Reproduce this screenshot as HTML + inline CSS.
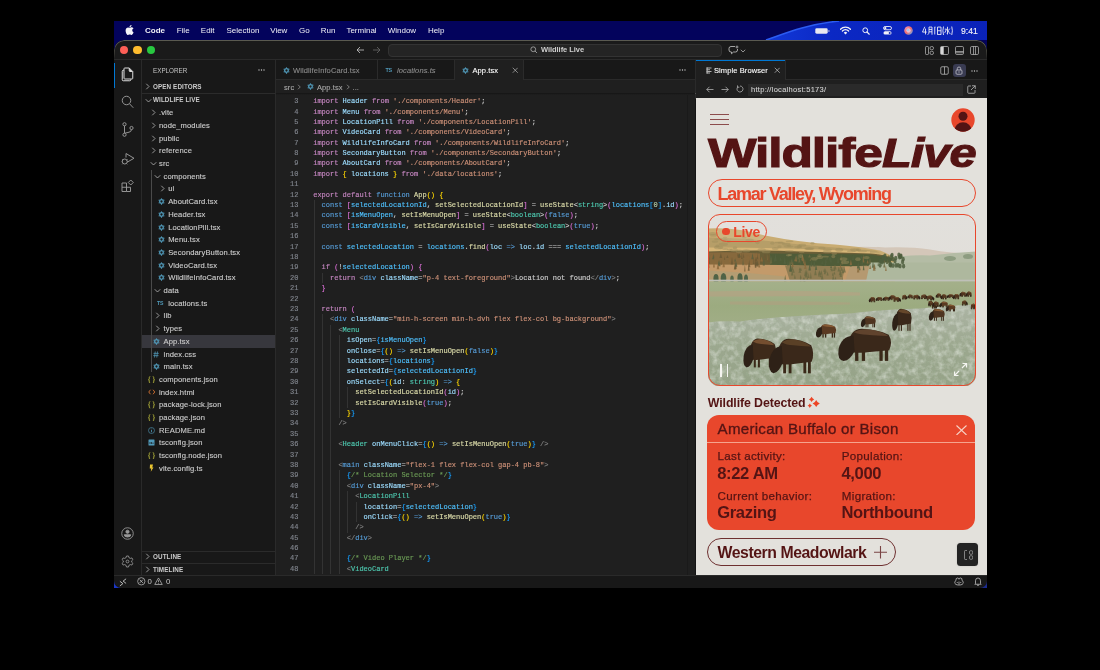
<!DOCTYPE html>
<html><head><meta charset="utf-8">
<style>
*{margin:0;padding:0;box-sizing:border-box}
html,body{width:1100px;height:670px;background:#000;overflow:hidden;font-family:"Liberation Sans",sans-serif}
.a{position:absolute}
#screen{left:114px;top:21px;width:873px;height:567px;overflow:hidden;background:#03035c}
#menubar{left:0;top:0;width:1100px;height:40px;color:#f0f0f6;font-size:8px;will-change:transform}
#menubar span{position:absolute;top:27px;white-space:nowrap;line-height:8px}
#win{left:0;top:0;width:1100px;height:670px;will-change:transform;clip-path:inset(40px 113px 82px 114px round 10px 10px 7px 7px)}
.p{position:absolute}
.mono{font-family:"Liberation Mono",monospace}
.tb{font-size:7.5px;line-height:9px;white-space:nowrap;letter-spacing:0.1px;-webkit-text-stroke:0.1px currentColor}
.ln{left:0;width:22.5px;text-align:right;font-family:"Liberation Mono",monospace;font-size:7px;line-height:10.395px;color:#80858d;-webkit-text-stroke:0.15px currentColor}
.cd{font-family:"Liberation Mono",monospace;font-size:7px;line-height:10.38px;white-space:pre;-webkit-text-stroke:0.15px currentColor}
.t{font-size:7.6px;line-height:9px;color:#cccccc;white-space:nowrap;letter-spacing:0.1px;-webkit-text-stroke:0.12px currentColor}
</style></head><body>
<div id="screen" class="a">
 <svg class="a" style="left:0;top:0" width="873" height="567" viewBox="0 0 873 567">
  <defs><linearGradient id="sg" x1="0" y1="0" x2="1" y2="0">
   <stop offset="0" stop-color="#1238d8"/><stop offset="0.3" stop-color="#0b28c4"/><stop offset="1" stop-color="#0a22b8"/></linearGradient></defs>
  <path d="M652 19 C 672 12, 690 4, 725 0 L 873 0 L 873 19 Z" fill="url(#sg)"/>
  <path d="M652 19 C 672 12, 690 4, 725 0" fill="none" stroke="#2c5cf2" stroke-width="1.6"/>
  <rect x="0" y="555" width="12" height="12" fill="#1a36c8"/>
  <rect x="861" y="555" width="12" height="12" fill="#1a2a90"/>
 </svg>
</div>
<div id="menubar" class="a">
 <svg class="a" style="left:125px;top:25px" width="9" height="10" viewBox="0 0 814 1000"><path fill="#f4f4f8" d="M788 341c-6 4-108 62-108 190 0 148 130 200 134 202-1 3-21 72-69 142-43 62-88 124-156 124s-86-40-164-40c-77 0-104 41-167 41s-106-57-156-127C63 791 16 662 16 539 16 343 144 239 270 239c67 0 123 44 165 44 40 0 102-47 178-47 29 0 133 3 201 105zM554 158c31-37 53-88 53-139 0-7-1-14-2-20-50 2-110 33-146 76-28 32-55 83-55 135 0 8 1 15 2 18 3 1 8 1 13 1 45 0 102-30 135-71z"/></svg>
 <span style="left:145px;font-weight:bold">Code</span>
 <span style="left:176.7px">File</span>
 <span style="left:200.8px">Edit</span>
 <span style="left:226.5px">Selection</span>
 <span style="left:270.2px">View</span>
 <span style="left:299px">Go</span>
 <span style="left:320.8px">Run</span>
 <span style="left:346.4px">Terminal</span>
 <span style="left:387.7px">Window</span>
 <span style="left:427.9px">Help</span>
 <svg class="a" style="left:815px;top:28px" width="15" height="6" viewBox="0 0 15 6"><rect x="0.3" y="0.3" width="12.4" height="5.4" rx="1.4" fill="#e8e8f0"/><rect x="13.3" y="2" width="1.2" height="2" rx="0.5" fill="#9aa0d0"/></svg>
 <svg class="a" style="left:840px;top:26px" width="11" height="9" viewBox="0 0 22 18"><path d="M1 6.5 A14 14 0 0 1 21 6.5" fill="none" stroke="#f2f2f8" stroke-width="2.6" stroke-linecap="round"/><path d="M4.8 10 A8.6 8.6 0 0 1 17.2 10" fill="none" stroke="#f2f2f8" stroke-width="2.6" stroke-linecap="round"/><path d="M11 17 L7.6 13.4 A4.6 4.6 0 0 1 14.4 13.4 Z" fill="#f2f2f8"/></svg>
 <svg class="a" style="left:861.5px;top:26.5px" width="8" height="8" viewBox="0 0 16 16"><circle cx="6.5" cy="6.5" r="4.8" fill="none" stroke="#f2f2f8" stroke-width="2"/><path d="M10 10 L14.5 14.5" stroke="#f2f2f8" stroke-width="2.2" stroke-linecap="round"/></svg>
 <svg class="a" style="left:882.5px;top:26px" width="9" height="9" viewBox="0 0 18 18"><rect x="1" y="1" width="16" height="6.5" rx="3.25" fill="none" stroke="#f2f2f8" stroke-width="1.8"/><circle cx="4.6" cy="4.25" r="2.2" fill="#f2f2f8"/><rect x="1" y="10.5" width="16" height="6.5" rx="3.25" fill="#f2f2f8"/><circle cx="13.4" cy="13.75" r="2" fill="#1a2ab0"/></svg>
 <svg class="a" style="left:903.5px;top:26px" width="9" height="9" viewBox="0 0 18 18"><defs><linearGradient id="siri" x1="0" y1="0" x2="1" y2="1"><stop offset="0" stop-color="#f0a0c0"/><stop offset="0.5" stop-color="#f06a6a"/><stop offset="1" stop-color="#60b0f0"/></linearGradient></defs><circle cx="9" cy="9" r="8.5" fill="url(#siri)"/><circle cx="9" cy="9" r="4.5" fill="#f4d0e8" opacity="0.8"/><circle cx="8" cy="8" r="2.5" fill="#8ad0f8" opacity="0.7"/></svg>
 <svg class="a" style="left:921.5px;top:26px" width="36" height="9.5" viewBox="0 0 72 18" preserveAspectRatio="none" fill="none" stroke="#f2f2f8" stroke-width="1.7">
  <path d="M5.5 1.5 L1 11.5 H9.5 M7 5 V16"/>
  <path d="M14 2 V11 Q14 15 11.5 16.5 M14 2 H20 V16.5 M14 6.5 H20 M14 11 H20"/>
  <path d="M25.5 16 V2 M25 2 H27"/>
  <path d="M31 2 V16.5 M31 2 H38 V16.5 M31 9 H38 M31 16 H38"/>
  <path d="M43 1 Q40.5 9 43 17"/>
  <path d="M51 1.5 V15.5 L49.5 14.5 M45.5 6 H49 L45.5 13 M55.5 5 L52.5 8.5 M52 8 Q54 13 57 15.5"/>
  <path d="M59.5 1 Q62 9 59.5 17"/>
 </svg>
 <span style="left:961px;font-size:8.6px;top:26.5px;-webkit-text-stroke:0.15px #f0f0f6">9:41</span>
</div>
<div id="win" class="a">
 <!-- base -->
 <div class="p" style="left:114px;top:40px;width:873px;height:548px;background:#181818"></div>

 <!-- title bar content -->
 <div class="p" style="left:114px;top:40px;width:873px;height:19px;background:#1a1a1a"></div>
 <div class="p" style="left:114px;top:40px;width:873px;height:30px;border:1px solid #5a5a50;border-bottom:none;border-radius:10px 10px 0 0;-webkit-mask-image:linear-gradient(#000 0,#000 4px,transparent 20px)"></div>
 <div class="p" style="left:119.8px;top:45.8px;width:8.4px;height:8.4px;border-radius:50%;background:#fe5f57"></div>
 <div class="p" style="left:133.4px;top:45.8px;width:8.4px;height:8.4px;border-radius:50%;background:#febc2e"></div>
 <div class="p" style="left:146.8px;top:45.8px;width:8.4px;height:8.4px;border-radius:50%;background:#28c840"></div>
 <svg class="p" style="left:356px;top:46px" width="9" height="8" viewBox="0 0 18 16" fill="none" stroke="#c8c8c8" stroke-width="1.6"><path d="M2 8 H16 M8 2 L2 8 L8 14"/></svg>
 <svg class="p" style="left:371.5px;top:46px" width="9" height="8" viewBox="0 0 18 16" fill="none" stroke="#6a6a6a" stroke-width="1.6"><path d="M2 8 H16 M10 2 L16 8 L10 14"/></svg>
 <div class="p" style="left:387.5px;top:43.5px;width:334px;height:13.5px;border-radius:4px;background:#242424;border:1px solid #333"></div>
 <svg class="p" style="left:529.5px;top:46px" width="8" height="7.5" viewBox="0 0 16 15" fill="none" stroke="#b8b8b8" stroke-width="1.5"><circle cx="6.5" cy="6.5" r="4.8"/><path d="M10 10 L14 14"/></svg>
 <div class="p" style="left:541px;top:46px;font-size:7.5px;line-height:8px;color:#cfcfcf;font-weight:bold;letter-spacing:-0.05px">Wildlife Live</div>
 <svg class="p" style="left:727.5px;top:45px" width="11" height="10" viewBox="0 0 22 20" fill="none" stroke="#c8c8c8" stroke-width="1.6"><path d="M14 3 H6 Q2 3 2 7 V10 Q2 14 6 14 H7 L7 17.5 L11 14 H15 Q19 14 19 10 V8"/><path d="M18 1 L18.6 3.4 L21 4 L18.6 4.6 L18 7 L17.4 4.6 L15 4 L17.4 3.4Z" fill="#c8c8c8" stroke-width="0.6"/></svg>
 <svg class="p" style="left:740px;top:48.5px" width="6" height="4" viewBox="0 0 12 8" fill="none" stroke="#b0b0b0" stroke-width="1.6"><path d="M1.5 1.5 L6 6 L10.5 1.5"/></svg>
 <svg class="p" style="left:924.5px;top:45.5px" width="9" height="9" viewBox="0 0 18 18" fill="none" stroke="#c0c0c0" stroke-width="1.4"><rect x="1" y="1" width="6" height="16" rx="1.5"/><rect x="10" y="1" width="7" height="6.5" rx="3"/><rect x="10" y="10.5" width="7" height="6.5" rx="3"/></svg>
 <svg class="p" style="left:939.5px;top:45.5px" width="9" height="9" viewBox="0 0 18 18" fill="none" stroke="#c8c8c8" stroke-width="1.4"><rect x="1" y="1" width="16" height="16" rx="2.5"/><rect x="1.5" y="1.5" width="5" height="15" fill="#d8d8d8" stroke="none"/><path d="M7 1 V17"/></svg>
 <svg class="p" style="left:954.5px;top:45.5px" width="9" height="9" viewBox="0 0 18 18" fill="none" stroke="#c0c0c0" stroke-width="1.4"><rect x="1" y="1" width="16" height="16" rx="2.5"/><path d="M1 11 H17 M1 13.5 H17"/></svg>
 <svg class="p" style="left:970px;top:45.5px" width="9" height="9" viewBox="0 0 18 18" fill="none" stroke="#c0c0c0" stroke-width="1.4"><rect x="1" y="1" width="16" height="16" rx="2.5"/><path d="M7 1 V17 M11 1 V17"/></svg>
 <!-- titlebar border -->
 <div class="p" style="left:114px;top:59px;width:873px;height:1px;background:#2a2a2a"></div>
 <!-- activity bar border -->
 <div class="p" style="left:141px;top:60px;width:1px;height:515px;background:#2a2a2a"></div>
 <!-- sidebar border -->
 <div class="p" style="left:275px;top:60px;width:1px;height:515px;background:#2a2a2a"></div>
 <!-- editor 1 -->
 <div class="p" style="left:276px;top:80px;width:419px;height:495px;background:#1f1f1f"></div>
 <div class="p" style="left:276px;top:79px;width:419px;height:1px;background:#2a2a2a"></div>
 <!-- group separator -->
 <div class="p" style="left:695px;top:60px;width:1px;height:39px;background:#2a2a2a"></div>
 <div class="p" style="left:694.6px;top:98.5px;width:1.6px;height:476.5px;background:#141414"></div>
 <div class="p" style="left:687.3px;top:94px;width:0.9px;height:481px;background:#1a1a1a"></div>
 <!-- editor 2 -->
 <div class="p" style="left:696px;top:80px;width:291px;height:19px;background:#1f1f1f"></div>
 <div class="p" style="left:696px;top:79px;width:291px;height:1px;background:#2a2a2a"></div>
 <div class="p" style="left:696px;top:98px;width:291px;height:477px;background:#e3e1dc"></div>
<!--SIDEBAR-->
<div class="p" style="left:153px;top:66.6px;font-size:6.3px;line-height:7px;color:#c4c4c4;letter-spacing:0px">EXPLORER</div>
<svg class="p" style="left:257.5px;top:69px" width="7" height="2" viewBox="0 0 14 4" fill="#c8c8c8"><circle cx="2" cy="2" r="1.3"/><circle cx="7" cy="2" r="1.3"/><circle cx="12" cy="2" r="1.3"/></svg>
<svg class="p" style="left:145px;top:83.2px" width="5" height="7" viewBox="0 0 10 14" fill="none" stroke="#c0c0c0" stroke-width="1.5"><path d="M2.5 1.5 L8 7 L2.5 12.5"/></svg>
<div class="p" style="left:153px;top:83.2px;font-size:6.3px;line-height:7px;color:#cccccc;font-weight:bold;letter-spacing:0.1px">OPEN EDITORS</div>
<div class="p" style="left:142px;top:93px;width:133px;height:1px;background:#2b2b2b"></div>
<svg class="p" style="left:144.5px;top:97.5px" width="7" height="5" viewBox="0 0 14 10" fill="none" stroke="#c0c0c0" stroke-width="1.5"><path d="M1.5 2.5 L7 8 L12.5 2.5"/></svg>
<div class="p" style="left:153px;top:96.2px;font-size:6.3px;line-height:7px;color:#cccccc;font-weight:bold;letter-spacing:0.1px">WILDLIFE LIVE</div>
<svg class="p" style="left:150.80px;top:109.20px" width="5" height="7" viewBox="0 0 10 14" fill="none" stroke="#c0c0c0" stroke-width="1.5"><path d="M2.5 1.5 L8 7 L2.5 12.5"/></svg>
<div class="p t" style="left:159.00px;top:108.20px">.vite</div>
<svg class="p" style="left:150.80px;top:121.90px" width="5" height="7" viewBox="0 0 10 14" fill="none" stroke="#c0c0c0" stroke-width="1.5"><path d="M2.5 1.5 L8 7 L2.5 12.5"/></svg>
<div class="p t" style="left:159.00px;top:120.90px">node_modules</div>
<svg class="p" style="left:150.80px;top:134.60px" width="5" height="7" viewBox="0 0 10 14" fill="none" stroke="#c0c0c0" stroke-width="1.5"><path d="M2.5 1.5 L8 7 L2.5 12.5"/></svg>
<div class="p t" style="left:159.00px;top:133.60px">public</div>
<svg class="p" style="left:150.80px;top:147.30px" width="5" height="7" viewBox="0 0 10 14" fill="none" stroke="#c0c0c0" stroke-width="1.5"><path d="M2.5 1.5 L8 7 L2.5 12.5"/></svg>
<div class="p t" style="left:159.00px;top:146.30px">reference</div>
<svg class="p" style="left:149.50px;top:161.00px" width="7" height="5" viewBox="0 0 14 10" fill="none" stroke="#c0c0c0" stroke-width="1.5"><path d="M1.5 2.5 L7 8 L12.5 2.5"/></svg>
<div class="p t" style="left:159.00px;top:159.00px">src</div>
<svg class="p" style="left:154.10px;top:173.70px" width="7" height="5" viewBox="0 0 14 10" fill="none" stroke="#c0c0c0" stroke-width="1.5"><path d="M1.5 2.5 L7 8 L12.5 2.5"/></svg>
<div class="p t" style="left:163.60px;top:171.70px">components</div>
<svg class="p" style="left:160.00px;top:185.40px" width="5" height="7" viewBox="0 0 10 14" fill="none" stroke="#c0c0c0" stroke-width="1.5"><path d="M2.5 1.5 L8 7 L2.5 12.5"/></svg>
<div class="p t" style="left:168.20px;top:184.40px">ui</div>
<svg class="p" style="left:157.6px;top:198.1px" width="7" height="7" viewBox="0 0 14 14" fill="none" stroke="#519aba"><circle cx="7" cy="7" r="3.6" stroke-width="2.6"/><g fill="#519aba" stroke="none"><circle cx="7" cy="1.6" r="1.2"/><circle cx="7" cy="12.4" r="1.2"/><circle cx="2.3" cy="4.3" r="1.2"/><circle cx="11.7" cy="4.3" r="1.2"/><circle cx="2.3" cy="9.7" r="1.2"/><circle cx="11.7" cy="9.7" r="1.2"/></g></svg>
<div class="p t" style="left:168.20px;top:197.10px">AboutCard.tsx</div>
<svg class="p" style="left:157.6px;top:210.8px" width="7" height="7" viewBox="0 0 14 14" fill="none" stroke="#519aba"><circle cx="7" cy="7" r="3.6" stroke-width="2.6"/><g fill="#519aba" stroke="none"><circle cx="7" cy="1.6" r="1.2"/><circle cx="7" cy="12.4" r="1.2"/><circle cx="2.3" cy="4.3" r="1.2"/><circle cx="11.7" cy="4.3" r="1.2"/><circle cx="2.3" cy="9.7" r="1.2"/><circle cx="11.7" cy="9.7" r="1.2"/></g></svg>
<div class="p t" style="left:168.20px;top:209.80px">Header.tsx</div>
<svg class="p" style="left:157.6px;top:223.5px" width="7" height="7" viewBox="0 0 14 14" fill="none" stroke="#519aba"><circle cx="7" cy="7" r="3.6" stroke-width="2.6"/><g fill="#519aba" stroke="none"><circle cx="7" cy="1.6" r="1.2"/><circle cx="7" cy="12.4" r="1.2"/><circle cx="2.3" cy="4.3" r="1.2"/><circle cx="11.7" cy="4.3" r="1.2"/><circle cx="2.3" cy="9.7" r="1.2"/><circle cx="11.7" cy="9.7" r="1.2"/></g></svg>
<div class="p t" style="left:168.20px;top:222.50px">LocationPill.tsx</div>
<svg class="p" style="left:157.6px;top:236.2px" width="7" height="7" viewBox="0 0 14 14" fill="none" stroke="#519aba"><circle cx="7" cy="7" r="3.6" stroke-width="2.6"/><g fill="#519aba" stroke="none"><circle cx="7" cy="1.6" r="1.2"/><circle cx="7" cy="12.4" r="1.2"/><circle cx="2.3" cy="4.3" r="1.2"/><circle cx="11.7" cy="4.3" r="1.2"/><circle cx="2.3" cy="9.7" r="1.2"/><circle cx="11.7" cy="9.7" r="1.2"/></g></svg>
<div class="p t" style="left:168.20px;top:235.20px">Menu.tsx</div>
<svg class="p" style="left:157.6px;top:248.9px" width="7" height="7" viewBox="0 0 14 14" fill="none" stroke="#519aba"><circle cx="7" cy="7" r="3.6" stroke-width="2.6"/><g fill="#519aba" stroke="none"><circle cx="7" cy="1.6" r="1.2"/><circle cx="7" cy="12.4" r="1.2"/><circle cx="2.3" cy="4.3" r="1.2"/><circle cx="11.7" cy="4.3" r="1.2"/><circle cx="2.3" cy="9.7" r="1.2"/><circle cx="11.7" cy="9.7" r="1.2"/></g></svg>
<div class="p t" style="left:168.20px;top:247.90px">SecondaryButton.tsx</div>
<svg class="p" style="left:157.6px;top:261.6px" width="7" height="7" viewBox="0 0 14 14" fill="none" stroke="#519aba"><circle cx="7" cy="7" r="3.6" stroke-width="2.6"/><g fill="#519aba" stroke="none"><circle cx="7" cy="1.6" r="1.2"/><circle cx="7" cy="12.4" r="1.2"/><circle cx="2.3" cy="4.3" r="1.2"/><circle cx="11.7" cy="4.3" r="1.2"/><circle cx="2.3" cy="9.7" r="1.2"/><circle cx="11.7" cy="9.7" r="1.2"/></g></svg>
<div class="p t" style="left:168.20px;top:260.60px">VideoCard.tsx</div>
<svg class="p" style="left:157.6px;top:274.3px" width="7" height="7" viewBox="0 0 14 14" fill="none" stroke="#519aba"><circle cx="7" cy="7" r="3.6" stroke-width="2.6"/><g fill="#519aba" stroke="none"><circle cx="7" cy="1.6" r="1.2"/><circle cx="7" cy="12.4" r="1.2"/><circle cx="2.3" cy="4.3" r="1.2"/><circle cx="11.7" cy="4.3" r="1.2"/><circle cx="2.3" cy="9.7" r="1.2"/><circle cx="11.7" cy="9.7" r="1.2"/></g></svg>
<div class="p t" style="left:168.20px;top:273.30px">WildlifeInfoCard.tsx</div>
<svg class="p" style="left:154.10px;top:288.00px" width="7" height="5" viewBox="0 0 14 10" fill="none" stroke="#c0c0c0" stroke-width="1.5"><path d="M1.5 2.5 L7 8 L12.5 2.5"/></svg>
<div class="p t" style="left:163.60px;top:286.00px">data</div>
<div class="p" style="left:157.1px;top:299.7px;font-size:5.2px;line-height:7px;font-weight:bold;color:#519aba;letter-spacing:-0.2px">TS</div>
<div class="p t" style="left:168.20px;top:298.70px">locations.ts</div>
<svg class="p" style="left:155.40px;top:312.40px" width="5" height="7" viewBox="0 0 10 14" fill="none" stroke="#c0c0c0" stroke-width="1.5"><path d="M2.5 1.5 L8 7 L2.5 12.5"/></svg>
<div class="p t" style="left:163.60px;top:311.40px">lib</div>
<svg class="p" style="left:155.40px;top:325.10px" width="5" height="7" viewBox="0 0 10 14" fill="none" stroke="#c0c0c0" stroke-width="1.5"><path d="M2.5 1.5 L8 7 L2.5 12.5"/></svg>
<div class="p t" style="left:163.60px;top:324.10px">types</div>
<div class="p" style="left:142px;top:335.10px;width:133px;height:12.6px;background:#37373d"></div>
<svg class="p" style="left:153.0px;top:337.8px" width="7" height="7" viewBox="0 0 14 14" fill="none" stroke="#519aba"><circle cx="7" cy="7" r="3.6" stroke-width="2.6"/><g fill="#519aba" stroke="none"><circle cx="7" cy="1.6" r="1.2"/><circle cx="7" cy="12.4" r="1.2"/><circle cx="2.3" cy="4.3" r="1.2"/><circle cx="11.7" cy="4.3" r="1.2"/><circle cx="2.3" cy="9.7" r="1.2"/><circle cx="11.7" cy="9.7" r="1.2"/></g></svg>
<div class="p t" style="left:163.60px;top:336.80px">App.tsx</div>
<svg class="p" style="left:153.3px;top:350.5px" width="6" height="7" viewBox="0 0 12 14" fill="none" stroke="#519aba" stroke-width="1.5"><path d="M4.5 1 L3 13 M9 1 L7.5 13 M1 4.8 H11.5 M0.5 9.2 H11"/></svg>
<div class="p t" style="left:163.60px;top:349.50px">index.css</div>
<svg class="p" style="left:153.0px;top:363.2px" width="7" height="7" viewBox="0 0 14 14" fill="none" stroke="#519aba"><circle cx="7" cy="7" r="3.6" stroke-width="2.6"/><g fill="#519aba" stroke="none"><circle cx="7" cy="1.6" r="1.2"/><circle cx="7" cy="12.4" r="1.2"/><circle cx="2.3" cy="4.3" r="1.2"/><circle cx="11.7" cy="4.3" r="1.2"/><circle cx="2.3" cy="9.7" r="1.2"/><circle cx="11.7" cy="9.7" r="1.2"/></g></svg>
<div class="p t" style="left:163.60px;top:362.20px">main.tsx</div>
<svg class="p" style="left:147.9px;top:375.59999999999997px" width="7" height="7.6" viewBox="0 0 14 15" fill="none" stroke="#cbcb41" stroke-width="1.5"><path d="M4.5 1 Q2.5 1 2.5 3 V5.8 Q2.5 7.5 1 7.5 Q2.5 7.5 2.5 9.2 V12 Q2.5 14 4.5 14 M9.5 1 Q11.5 1 11.5 3 V5.8 Q11.5 7.5 13 7.5 Q11.5 7.5 11.5 9.2 V12 Q11.5 14 9.5 14"/></svg>
<div class="p t" style="left:159.00px;top:374.90px">components.json</div>
<svg class="p" style="left:147.9px;top:389.1px" width="7.5" height="6" viewBox="0 0 15 12" fill="none" stroke="#e37933" stroke-width="1.7"><path d="M5 1.5 L1.5 6 L5 10.5 M10 1.5 L13.5 6 L10 10.5"/></svg>
<div class="p t" style="left:159.00px;top:387.60px">index.html</div>
<svg class="p" style="left:147.9px;top:401.0px" width="7" height="7.6" viewBox="0 0 14 15" fill="none" stroke="#cbcb41" stroke-width="1.5"><path d="M4.5 1 Q2.5 1 2.5 3 V5.8 Q2.5 7.5 1 7.5 Q2.5 7.5 2.5 9.2 V12 Q2.5 14 4.5 14 M9.5 1 Q11.5 1 11.5 3 V5.8 Q11.5 7.5 13 7.5 Q11.5 7.5 11.5 9.2 V12 Q11.5 14 9.5 14"/></svg>
<div class="p t" style="left:159.00px;top:400.30px">package-lock.json</div>
<svg class="p" style="left:147.9px;top:413.7px" width="7" height="7.6" viewBox="0 0 14 15" fill="none" stroke="#cbcb41" stroke-width="1.5"><path d="M4.5 1 Q2.5 1 2.5 3 V5.8 Q2.5 7.5 1 7.5 Q2.5 7.5 2.5 9.2 V12 Q2.5 14 4.5 14 M9.5 1 Q11.5 1 11.5 3 V5.8 Q11.5 7.5 13 7.5 Q11.5 7.5 11.5 9.2 V12 Q11.5 14 9.5 14"/></svg>
<div class="p t" style="left:159.00px;top:413.00px">package.json</div>
<svg class="p" style="left:148.4px;top:426.7px" width="7" height="7" viewBox="0 0 14 14" fill="none" stroke="#519aba" stroke-width="1.2"><circle cx="7" cy="7" r="6"/><path d="M7 6 V10.5" stroke-width="1.6"/><circle cx="7" cy="3.8" r="0.9" fill="#519aba" stroke="none"/></svg>
<div class="p t" style="left:159.00px;top:425.70px">README.md</div>
<svg class="p" style="left:148.4px;top:439.4px" width="7" height="7" viewBox="0 0 14 14"><rect x="1" y="1" width="12" height="12" rx="1" fill="#519aba"/><path d="M4 10 V6 M7 10 V6 M10 10 V7" stroke="#181818" stroke-width="1.4"/></svg>
<div class="p t" style="left:159.00px;top:438.40px">tsconfig.json</div>
<svg class="p" style="left:147.9px;top:451.8px" width="7" height="7.6" viewBox="0 0 14 15" fill="none" stroke="#cbcb41" stroke-width="1.5"><path d="M4.5 1 Q2.5 1 2.5 3 V5.8 Q2.5 7.5 1 7.5 Q2.5 7.5 2.5 9.2 V12 Q2.5 14 4.5 14 M9.5 1 Q11.5 1 11.5 3 V5.8 Q11.5 7.5 13 7.5 Q11.5 7.5 11.5 9.2 V12 Q11.5 14 9.5 14"/></svg>
<div class="p t" style="left:159.00px;top:451.10px">tsconfig.node.json</div>
<svg class="p" style="left:149.4px;top:464.3px" width="5" height="8" viewBox="0 0 10 16"><path d="M2 1 H8 L6.5 7 H9 L3.5 15.5 L4.5 9 H1.5 Z" fill="#e8c431"/></svg>
<div class="p t" style="left:159.00px;top:463.80px">vite.config.ts</div>
<div class="p" style="left:150.5px;top:169.5px;width:0.8px;height:202px;background:#4a4a4a"></div>
<div class="p" style="left:142px;top:550.5px;width:133px;height:1px;background:#2b2b2b"></div>
<div class="p" style="left:142px;top:563px;width:133px;height:1px;background:#2b2b2b"></div>
<svg class="p" style="left:145px;top:553.3px" width="5" height="7" viewBox="0 0 10 14" fill="none" stroke="#c0c0c0" stroke-width="1.5"><path d="M2.5 1.5 L8 7 L2.5 12.5"/></svg>
<div class="p" style="left:153px;top:553.3px;font-size:6.3px;line-height:7px;color:#cccccc;font-weight:bold;letter-spacing:0.1px">OUTLINE</div>
<svg class="p" style="left:145px;top:566px" width="5" height="7" viewBox="0 0 10 14" fill="none" stroke="#c0c0c0" stroke-width="1.5"><path d="M2.5 1.5 L8 7 L2.5 12.5"/></svg>
<div class="p" style="left:153px;top:566px;font-size:6.3px;line-height:7px;color:#cccccc;font-weight:bold;letter-spacing:0.1px">TIMELINE</div>
<!--/SIDEBAR-->
<!--CODE-->
<div class="p" style="left:276px;top:93px;width:411px;height:482px;overflow:hidden">
<div class="p" style="left:37.50px;top:107.05px;width:0.8px;height:10.45px;background:#333333"></div>
<div class="p" style="left:37.50px;top:117.45px;width:0.8px;height:10.45px;background:#333333"></div>
<div class="p" style="left:37.50px;top:127.84px;width:0.8px;height:10.45px;background:#333333"></div>
<div class="p" style="left:37.50px;top:138.24px;width:0.8px;height:10.45px;background:#333333"></div>
<div class="p" style="left:37.50px;top:148.63px;width:0.8px;height:10.45px;background:#333333"></div>
<div class="p" style="left:37.50px;top:159.03px;width:0.8px;height:10.45px;background:#333333"></div>
<div class="p" style="left:37.50px;top:169.42px;width:0.8px;height:10.45px;background:#333333"></div>
<div class="p" style="left:37.50px;top:179.82px;width:0.8px;height:10.45px;background:#333333"></div>
<div class="p" style="left:45.90px;top:179.82px;width:0.8px;height:10.45px;background:#333333"></div>
<div class="p" style="left:37.50px;top:190.21px;width:0.8px;height:10.45px;background:#333333"></div>
<div class="p" style="left:37.50px;top:200.61px;width:0.8px;height:10.45px;background:#333333"></div>
<div class="p" style="left:37.50px;top:211.00px;width:0.8px;height:10.45px;background:#333333"></div>
<div class="p" style="left:37.50px;top:221.40px;width:0.8px;height:10.45px;background:#333333"></div>
<div class="p" style="left:45.90px;top:221.40px;width:0.8px;height:10.45px;background:#333333"></div>
<div class="p" style="left:37.50px;top:231.79px;width:0.8px;height:10.45px;background:#333333"></div>
<div class="p" style="left:45.90px;top:231.79px;width:0.8px;height:10.45px;background:#333333"></div>
<div class="p" style="left:54.30px;top:231.79px;width:0.8px;height:10.45px;background:#333333"></div>
<div class="p" style="left:37.50px;top:242.19px;width:0.8px;height:10.45px;background:#333333"></div>
<div class="p" style="left:45.90px;top:242.19px;width:0.8px;height:10.45px;background:#333333"></div>
<div class="p" style="left:54.30px;top:242.19px;width:0.8px;height:10.45px;background:#333333"></div>
<div class="p" style="left:62.70px;top:242.19px;width:0.8px;height:10.45px;background:#333333"></div>
<div class="p" style="left:37.50px;top:252.58px;width:0.8px;height:10.45px;background:#333333"></div>
<div class="p" style="left:45.90px;top:252.58px;width:0.8px;height:10.45px;background:#333333"></div>
<div class="p" style="left:54.30px;top:252.58px;width:0.8px;height:10.45px;background:#333333"></div>
<div class="p" style="left:62.70px;top:252.58px;width:0.8px;height:10.45px;background:#333333"></div>
<div class="p" style="left:37.50px;top:262.98px;width:0.8px;height:10.45px;background:#333333"></div>
<div class="p" style="left:45.90px;top:262.98px;width:0.8px;height:10.45px;background:#333333"></div>
<div class="p" style="left:54.30px;top:262.98px;width:0.8px;height:10.45px;background:#333333"></div>
<div class="p" style="left:62.70px;top:262.98px;width:0.8px;height:10.45px;background:#333333"></div>
<div class="p" style="left:37.50px;top:273.37px;width:0.8px;height:10.45px;background:#333333"></div>
<div class="p" style="left:45.90px;top:273.37px;width:0.8px;height:10.45px;background:#333333"></div>
<div class="p" style="left:54.30px;top:273.37px;width:0.8px;height:10.45px;background:#333333"></div>
<div class="p" style="left:62.70px;top:273.37px;width:0.8px;height:10.45px;background:#333333"></div>
<div class="p" style="left:37.50px;top:283.77px;width:0.8px;height:10.45px;background:#333333"></div>
<div class="p" style="left:45.90px;top:283.77px;width:0.8px;height:10.45px;background:#333333"></div>
<div class="p" style="left:54.30px;top:283.77px;width:0.8px;height:10.45px;background:#333333"></div>
<div class="p" style="left:62.70px;top:283.77px;width:0.8px;height:10.45px;background:#333333"></div>
<div class="p" style="left:37.50px;top:294.16px;width:0.8px;height:10.45px;background:#333333"></div>
<div class="p" style="left:45.90px;top:294.16px;width:0.8px;height:10.45px;background:#333333"></div>
<div class="p" style="left:54.30px;top:294.16px;width:0.8px;height:10.45px;background:#333333"></div>
<div class="p" style="left:62.70px;top:294.16px;width:0.8px;height:10.45px;background:#333333"></div>
<div class="p" style="left:71.10px;top:294.16px;width:0.8px;height:10.45px;background:#333333"></div>
<div class="p" style="left:37.50px;top:304.56px;width:0.8px;height:10.45px;background:#333333"></div>
<div class="p" style="left:45.90px;top:304.56px;width:0.8px;height:10.45px;background:#333333"></div>
<div class="p" style="left:54.30px;top:304.56px;width:0.8px;height:10.45px;background:#333333"></div>
<div class="p" style="left:62.70px;top:304.56px;width:0.8px;height:10.45px;background:#333333"></div>
<div class="p" style="left:71.10px;top:304.56px;width:0.8px;height:10.45px;background:#333333"></div>
<div class="p" style="left:37.50px;top:314.95px;width:0.8px;height:10.45px;background:#333333"></div>
<div class="p" style="left:45.90px;top:314.95px;width:0.8px;height:10.45px;background:#333333"></div>
<div class="p" style="left:54.30px;top:314.95px;width:0.8px;height:10.45px;background:#333333"></div>
<div class="p" style="left:62.70px;top:314.95px;width:0.8px;height:10.45px;background:#333333"></div>
<div class="p" style="left:37.50px;top:325.35px;width:0.8px;height:10.45px;background:#333333"></div>
<div class="p" style="left:45.90px;top:325.35px;width:0.8px;height:10.45px;background:#333333"></div>
<div class="p" style="left:54.30px;top:325.35px;width:0.8px;height:10.45px;background:#333333"></div>
<div class="p" style="left:37.50px;top:335.74px;width:0.8px;height:10.45px;background:#333333"></div>
<div class="p" style="left:45.90px;top:335.74px;width:0.8px;height:10.45px;background:#333333"></div>
<div class="p" style="left:54.30px;top:335.74px;width:0.8px;height:10.45px;background:#333333"></div>
<div class="p" style="left:37.50px;top:346.14px;width:0.8px;height:10.45px;background:#333333"></div>
<div class="p" style="left:45.90px;top:346.14px;width:0.8px;height:10.45px;background:#333333"></div>
<div class="p" style="left:54.30px;top:346.14px;width:0.8px;height:10.45px;background:#333333"></div>
<div class="p" style="left:37.50px;top:356.53px;width:0.8px;height:10.45px;background:#333333"></div>
<div class="p" style="left:45.90px;top:356.53px;width:0.8px;height:10.45px;background:#333333"></div>
<div class="p" style="left:54.30px;top:356.53px;width:0.8px;height:10.45px;background:#333333"></div>
<div class="p" style="left:37.50px;top:366.93px;width:0.8px;height:10.45px;background:#333333"></div>
<div class="p" style="left:45.90px;top:366.93px;width:0.8px;height:10.45px;background:#333333"></div>
<div class="p" style="left:54.30px;top:366.93px;width:0.8px;height:10.45px;background:#333333"></div>
<div class="p" style="left:37.50px;top:377.32px;width:0.8px;height:10.45px;background:#333333"></div>
<div class="p" style="left:45.90px;top:377.32px;width:0.8px;height:10.45px;background:#333333"></div>
<div class="p" style="left:54.30px;top:377.32px;width:0.8px;height:10.45px;background:#333333"></div>
<div class="p" style="left:62.70px;top:377.32px;width:0.8px;height:10.45px;background:#333333"></div>
<div class="p" style="left:37.50px;top:387.72px;width:0.8px;height:10.45px;background:#333333"></div>
<div class="p" style="left:45.90px;top:387.72px;width:0.8px;height:10.45px;background:#333333"></div>
<div class="p" style="left:54.30px;top:387.72px;width:0.8px;height:10.45px;background:#333333"></div>
<div class="p" style="left:62.70px;top:387.72px;width:0.8px;height:10.45px;background:#333333"></div>
<div class="p" style="left:37.50px;top:398.11px;width:0.8px;height:10.45px;background:#333333"></div>
<div class="p" style="left:45.90px;top:398.11px;width:0.8px;height:10.45px;background:#333333"></div>
<div class="p" style="left:54.30px;top:398.11px;width:0.8px;height:10.45px;background:#333333"></div>
<div class="p" style="left:62.70px;top:398.11px;width:0.8px;height:10.45px;background:#333333"></div>
<div class="p" style="left:71.10px;top:398.11px;width:0.8px;height:10.45px;background:#333333"></div>
<div class="p" style="left:37.50px;top:408.51px;width:0.8px;height:10.45px;background:#333333"></div>
<div class="p" style="left:45.90px;top:408.51px;width:0.8px;height:10.45px;background:#333333"></div>
<div class="p" style="left:54.30px;top:408.51px;width:0.8px;height:10.45px;background:#333333"></div>
<div class="p" style="left:62.70px;top:408.51px;width:0.8px;height:10.45px;background:#333333"></div>
<div class="p" style="left:71.10px;top:408.51px;width:0.8px;height:10.45px;background:#333333"></div>
<div class="p" style="left:79.50px;top:408.51px;width:0.8px;height:10.45px;background:#333333"></div>
<div class="p" style="left:37.50px;top:418.90px;width:0.8px;height:10.45px;background:#333333"></div>
<div class="p" style="left:45.90px;top:418.90px;width:0.8px;height:10.45px;background:#333333"></div>
<div class="p" style="left:54.30px;top:418.90px;width:0.8px;height:10.45px;background:#333333"></div>
<div class="p" style="left:62.70px;top:418.90px;width:0.8px;height:10.45px;background:#333333"></div>
<div class="p" style="left:71.10px;top:418.90px;width:0.8px;height:10.45px;background:#333333"></div>
<div class="p" style="left:79.50px;top:418.90px;width:0.8px;height:10.45px;background:#333333"></div>
<div class="p" style="left:37.50px;top:429.30px;width:0.8px;height:10.45px;background:#333333"></div>
<div class="p" style="left:45.90px;top:429.30px;width:0.8px;height:10.45px;background:#333333"></div>
<div class="p" style="left:54.30px;top:429.30px;width:0.8px;height:10.45px;background:#333333"></div>
<div class="p" style="left:62.70px;top:429.30px;width:0.8px;height:10.45px;background:#333333"></div>
<div class="p" style="left:71.10px;top:429.30px;width:0.8px;height:10.45px;background:#333333"></div>
<div class="p" style="left:37.50px;top:439.69px;width:0.8px;height:10.45px;background:#333333"></div>
<div class="p" style="left:45.90px;top:439.69px;width:0.8px;height:10.45px;background:#333333"></div>
<div class="p" style="left:54.30px;top:439.69px;width:0.8px;height:10.45px;background:#333333"></div>
<div class="p" style="left:62.70px;top:439.69px;width:0.8px;height:10.45px;background:#333333"></div>
<div class="p" style="left:37.50px;top:450.09px;width:0.8px;height:10.45px;background:#333333"></div>
<div class="p" style="left:45.90px;top:450.09px;width:0.8px;height:10.45px;background:#333333"></div>
<div class="p" style="left:54.30px;top:450.09px;width:0.8px;height:10.45px;background:#333333"></div>
<div class="p" style="left:62.70px;top:450.09px;width:0.8px;height:10.45px;background:#333333"></div>
<div class="p" style="left:37.50px;top:460.48px;width:0.8px;height:10.45px;background:#333333"></div>
<div class="p" style="left:45.90px;top:460.48px;width:0.8px;height:10.45px;background:#333333"></div>
<div class="p" style="left:54.30px;top:460.48px;width:0.8px;height:10.45px;background:#333333"></div>
<div class="p" style="left:62.70px;top:460.48px;width:0.8px;height:10.45px;background:#333333"></div>
<div class="p" style="left:37.50px;top:470.88px;width:0.8px;height:10.45px;background:#333333"></div>
<div class="p" style="left:45.90px;top:470.88px;width:0.8px;height:10.45px;background:#333333"></div>
<div class="p" style="left:54.30px;top:470.88px;width:0.8px;height:10.45px;background:#333333"></div>
<div class="p" style="left:62.70px;top:470.88px;width:0.8px;height:10.45px;background:#333333"></div>
<div class="p ln" style="top:-7.29px">2</div>
<div class="p cd" style="left:37.19999999999999px;top:-7.29px"><span style="color:#C586C0">import</span><span style="color:#CCCCCC"> </span><span style="color:#FFD700">{</span><span style="color:#9CDCFE"> useState </span><span style="color:#FFD700">}</span><span style="color:#CCCCCC"> </span><span style="color:#C586C0">from</span><span style="color:#CCCCCC"> </span><span style="color:#CE9178">&#x27;react&#x27;</span><span style="color:#CCCCCC">;</span></div>
<div class="p ln" style="top:3.10px">3</div>
<div class="p cd" style="left:37.19999999999999px;top:3.10px"><span style="color:#C586C0">import</span><span style="color:#CCCCCC"> </span><span style="color:#9CDCFE">Header</span><span style="color:#CCCCCC"> </span><span style="color:#C586C0">from</span><span style="color:#CCCCCC"> </span><span style="color:#CE9178">&#x27;./components/Header&#x27;</span><span style="color:#CCCCCC">;</span></div>
<div class="p ln" style="top:13.50px">4</div>
<div class="p cd" style="left:37.19999999999999px;top:13.50px"><span style="color:#C586C0">import</span><span style="color:#CCCCCC"> </span><span style="color:#9CDCFE">Menu</span><span style="color:#CCCCCC"> </span><span style="color:#C586C0">from</span><span style="color:#CCCCCC"> </span><span style="color:#CE9178">&#x27;./components/Menu&#x27;</span><span style="color:#CCCCCC">;</span></div>
<div class="p ln" style="top:23.89px">5</div>
<div class="p cd" style="left:37.19999999999999px;top:23.89px"><span style="color:#C586C0">import</span><span style="color:#CCCCCC"> </span><span style="color:#9CDCFE">LocationPill</span><span style="color:#CCCCCC"> </span><span style="color:#C586C0">from</span><span style="color:#CCCCCC"> </span><span style="color:#CE9178">&#x27;./components/LocationPill&#x27;</span><span style="color:#CCCCCC">;</span></div>
<div class="p ln" style="top:34.29px">6</div>
<div class="p cd" style="left:37.19999999999999px;top:34.29px"><span style="color:#C586C0">import</span><span style="color:#CCCCCC"> </span><span style="color:#9CDCFE">VideoCard</span><span style="color:#CCCCCC"> </span><span style="color:#C586C0">from</span><span style="color:#CCCCCC"> </span><span style="color:#CE9178">&#x27;./components/VideoCard&#x27;</span><span style="color:#CCCCCC">;</span></div>
<div class="p ln" style="top:44.68px">7</div>
<div class="p cd" style="left:37.19999999999999px;top:44.68px"><span style="color:#C586C0">import</span><span style="color:#CCCCCC"> </span><span style="color:#9CDCFE">WildlifeInfoCard</span><span style="color:#CCCCCC"> </span><span style="color:#C586C0">from</span><span style="color:#CCCCCC"> </span><span style="color:#CE9178">&#x27;./components/WildlifeInfoCard&#x27;</span><span style="color:#CCCCCC">;</span></div>
<div class="p ln" style="top:55.08px">8</div>
<div class="p cd" style="left:37.19999999999999px;top:55.08px"><span style="color:#C586C0">import</span><span style="color:#CCCCCC"> </span><span style="color:#9CDCFE">SecondaryButton</span><span style="color:#CCCCCC"> </span><span style="color:#C586C0">from</span><span style="color:#CCCCCC"> </span><span style="color:#CE9178">&#x27;./components/SecondaryButton&#x27;</span><span style="color:#CCCCCC">;</span></div>
<div class="p ln" style="top:65.47px">9</div>
<div class="p cd" style="left:37.19999999999999px;top:65.47px"><span style="color:#C586C0">import</span><span style="color:#CCCCCC"> </span><span style="color:#9CDCFE">AboutCard</span><span style="color:#CCCCCC"> </span><span style="color:#C586C0">from</span><span style="color:#CCCCCC"> </span><span style="color:#CE9178">&#x27;./components/AboutCard&#x27;</span><span style="color:#CCCCCC">;</span></div>
<div class="p ln" style="top:75.87px">10</div>
<div class="p cd" style="left:37.19999999999999px;top:75.87px"><span style="color:#C586C0">import</span><span style="color:#CCCCCC"> </span><span style="color:#FFD700">{</span><span style="color:#9CDCFE"> locations </span><span style="color:#FFD700">}</span><span style="color:#CCCCCC"> </span><span style="color:#C586C0">from</span><span style="color:#CCCCCC"> </span><span style="color:#CE9178">&#x27;./data/locations&#x27;</span><span style="color:#CCCCCC">;</span></div>
<div class="p ln" style="top:86.26px">11</div>
<div class="p cd" style="left:37.19999999999999px;top:86.26px"></div>
<div class="p ln" style="top:96.66px">12</div>
<div class="p cd" style="left:37.19999999999999px;top:96.66px"><span style="color:#C586C0">export</span><span style="color:#CCCCCC"> </span><span style="color:#C586C0">default</span><span style="color:#CCCCCC"> </span><span style="color:#569CD6">function</span><span style="color:#CCCCCC"> </span><span style="color:#DCDCAA">App</span><span style="color:#FFD700">()</span><span style="color:#CCCCCC"> </span><span style="color:#FFD700">{</span></div>
<div class="p ln" style="top:107.05px">13</div>
<div class="p cd" style="left:37.19999999999999px;top:107.05px"><span style="color:#CCCCCC">  </span><span style="color:#569CD6">const</span><span style="color:#CCCCCC"> </span><span style="color:#DA70D6">[</span><span style="color:#4FC1FF">selectedLocationId</span><span style="color:#CCCCCC">, </span><span style="color:#DCDCAA">setSelectedLocationId</span><span style="color:#DA70D6">]</span><span style="color:#CCCCCC"> = </span><span style="color:#DCDCAA">useState</span><span style="color:#CCCCCC">&lt;</span><span style="color:#4EC9B0">string</span><span style="color:#CCCCCC">&gt;</span><span style="color:#DA70D6">(</span><span style="color:#4FC1FF">locations</span><span style="color:#179FFF">[</span><span style="color:#B5CEA8">0</span><span style="color:#179FFF">]</span><span style="color:#CCCCCC">.</span><span style="color:#9CDCFE">id</span><span style="color:#DA70D6">)</span><span style="color:#CCCCCC">;</span></div>
<div class="p ln" style="top:117.45px">14</div>
<div class="p cd" style="left:37.19999999999999px;top:117.45px"><span style="color:#CCCCCC">  </span><span style="color:#569CD6">const</span><span style="color:#CCCCCC"> </span><span style="color:#DA70D6">[</span><span style="color:#4FC1FF">isMenuOpen</span><span style="color:#CCCCCC">, </span><span style="color:#DCDCAA">setIsMenuOpen</span><span style="color:#DA70D6">]</span><span style="color:#CCCCCC"> = </span><span style="color:#DCDCAA">useState</span><span style="color:#CCCCCC">&lt;</span><span style="color:#4EC9B0">boolean</span><span style="color:#CCCCCC">&gt;</span><span style="color:#DA70D6">(</span><span style="color:#569CD6">false</span><span style="color:#DA70D6">)</span><span style="color:#CCCCCC">;</span></div>
<div class="p ln" style="top:127.84px">15</div>
<div class="p cd" style="left:37.19999999999999px;top:127.84px"><span style="color:#CCCCCC">  </span><span style="color:#569CD6">const</span><span style="color:#CCCCCC"> </span><span style="color:#DA70D6">[</span><span style="color:#4FC1FF">isCardVisible</span><span style="color:#CCCCCC">, </span><span style="color:#DCDCAA">setIsCardVisible</span><span style="color:#DA70D6">]</span><span style="color:#CCCCCC"> = </span><span style="color:#DCDCAA">useState</span><span style="color:#CCCCCC">&lt;</span><span style="color:#4EC9B0">boolean</span><span style="color:#CCCCCC">&gt;</span><span style="color:#DA70D6">(</span><span style="color:#569CD6">true</span><span style="color:#DA70D6">)</span><span style="color:#CCCCCC">;</span></div>
<div class="p ln" style="top:138.24px">16</div>
<div class="p cd" style="left:37.19999999999999px;top:138.24px"></div>
<div class="p ln" style="top:148.63px">17</div>
<div class="p cd" style="left:37.19999999999999px;top:148.63px"><span style="color:#CCCCCC">  </span><span style="color:#569CD6">const</span><span style="color:#CCCCCC"> </span><span style="color:#4FC1FF">selectedLocation</span><span style="color:#CCCCCC"> = </span><span style="color:#4FC1FF">locations</span><span style="color:#CCCCCC">.</span><span style="color:#DCDCAA">find</span><span style="color:#DA70D6">(</span><span style="color:#9CDCFE">loc</span><span style="color:#CCCCCC"> </span><span style="color:#569CD6">=&gt;</span><span style="color:#CCCCCC"> </span><span style="color:#9CDCFE">loc</span><span style="color:#CCCCCC">.</span><span style="color:#9CDCFE">id</span><span style="color:#CCCCCC"> === </span><span style="color:#4FC1FF">selectedLocationId</span><span style="color:#DA70D6">)</span><span style="color:#CCCCCC">;</span></div>
<div class="p ln" style="top:159.03px">18</div>
<div class="p cd" style="left:37.19999999999999px;top:159.03px"></div>
<div class="p ln" style="top:169.42px">19</div>
<div class="p cd" style="left:37.19999999999999px;top:169.42px"><span style="color:#CCCCCC">  </span><span style="color:#C586C0">if</span><span style="color:#CCCCCC"> </span><span style="color:#DA70D6">(</span><span style="color:#CCCCCC">!</span><span style="color:#4FC1FF">selectedLocation</span><span style="color:#DA70D6">)</span><span style="color:#CCCCCC"> </span><span style="color:#DA70D6">{</span></div>
<div class="p ln" style="top:179.82px">20</div>
<div class="p cd" style="left:37.19999999999999px;top:179.82px"><span style="color:#CCCCCC">    </span><span style="color:#C586C0">return</span><span style="color:#CCCCCC"> </span><span style="color:#808080">&lt;</span><span style="color:#569CD6">div</span><span style="color:#CCCCCC"> </span><span style="color:#9CDCFE">className</span><span style="color:#CCCCCC">=</span><span style="color:#CE9178">&quot;p-4 text-foreground&quot;</span><span style="color:#808080">&gt;</span><span style="color:#CCCCCC">Location not found</span><span style="color:#808080">&lt;/</span><span style="color:#569CD6">div</span><span style="color:#808080">&gt;</span><span style="color:#CCCCCC">;</span></div>
<div class="p ln" style="top:190.21px">21</div>
<div class="p cd" style="left:37.19999999999999px;top:190.21px"><span style="color:#CCCCCC">  </span><span style="color:#DA70D6">}</span></div>
<div class="p ln" style="top:200.61px">22</div>
<div class="p cd" style="left:37.19999999999999px;top:200.61px"></div>
<div class="p ln" style="top:211.00px">23</div>
<div class="p cd" style="left:37.19999999999999px;top:211.00px"><span style="color:#CCCCCC">  </span><span style="color:#C586C0">return</span><span style="color:#CCCCCC"> </span><span style="color:#DA70D6">(</span></div>
<div class="p ln" style="top:221.40px">24</div>
<div class="p cd" style="left:37.19999999999999px;top:221.40px"><span style="color:#CCCCCC">    </span><span style="color:#808080">&lt;</span><span style="color:#569CD6">div</span><span style="color:#CCCCCC"> </span><span style="color:#9CDCFE">className</span><span style="color:#CCCCCC">=</span><span style="color:#CE9178">&quot;min-h-screen min-h-dvh flex flex-col bg-background&quot;</span><span style="color:#808080">&gt;</span></div>
<div class="p ln" style="top:231.79px">25</div>
<div class="p cd" style="left:37.19999999999999px;top:231.79px"><span style="color:#CCCCCC">      </span><span style="color:#808080">&lt;</span><span style="color:#4EC9B0">Menu</span></div>
<div class="p ln" style="top:242.19px">26</div>
<div class="p cd" style="left:37.19999999999999px;top:242.19px"><span style="color:#CCCCCC">        </span><span style="color:#9CDCFE">isOpen</span><span style="color:#CCCCCC">=</span><span style="color:#179FFF">{</span><span style="color:#4FC1FF">isMenuOpen</span><span style="color:#179FFF">}</span></div>
<div class="p ln" style="top:252.58px">27</div>
<div class="p cd" style="left:37.19999999999999px;top:252.58px"><span style="color:#CCCCCC">        </span><span style="color:#9CDCFE">onClose</span><span style="color:#CCCCCC">=</span><span style="color:#179FFF">{</span><span style="color:#FFD700">()</span><span style="color:#CCCCCC"> </span><span style="color:#569CD6">=&gt;</span><span style="color:#CCCCCC"> </span><span style="color:#DCDCAA">setIsMenuOpen</span><span style="color:#FFD700">(</span><span style="color:#569CD6">false</span><span style="color:#FFD700">)</span><span style="color:#179FFF">}</span></div>
<div class="p ln" style="top:262.98px">28</div>
<div class="p cd" style="left:37.19999999999999px;top:262.98px"><span style="color:#CCCCCC">        </span><span style="color:#9CDCFE">locations</span><span style="color:#CCCCCC">=</span><span style="color:#179FFF">{</span><span style="color:#4FC1FF">locations</span><span style="color:#179FFF">}</span></div>
<div class="p ln" style="top:273.37px">29</div>
<div class="p cd" style="left:37.19999999999999px;top:273.37px"><span style="color:#CCCCCC">        </span><span style="color:#9CDCFE">selectedId</span><span style="color:#CCCCCC">=</span><span style="color:#179FFF">{</span><span style="color:#4FC1FF">selectedLocationId</span><span style="color:#179FFF">}</span></div>
<div class="p ln" style="top:283.77px">30</div>
<div class="p cd" style="left:37.19999999999999px;top:283.77px"><span style="color:#CCCCCC">        </span><span style="color:#9CDCFE">onSelect</span><span style="color:#CCCCCC">=</span><span style="color:#179FFF">{</span><span style="color:#FFD700">(</span><span style="color:#9CDCFE">id</span><span style="color:#CCCCCC">: </span><span style="color:#4EC9B0">string</span><span style="color:#FFD700">)</span><span style="color:#CCCCCC"> </span><span style="color:#569CD6">=&gt;</span><span style="color:#CCCCCC"> </span><span style="color:#FFD700">{</span></div>
<div class="p ln" style="top:294.16px">31</div>
<div class="p cd" style="left:37.19999999999999px;top:294.16px"><span style="color:#CCCCCC">          </span><span style="color:#DCDCAA">setSelectedLocationId</span><span style="color:#DA70D6">(</span><span style="color:#9CDCFE">id</span><span style="color:#DA70D6">)</span><span style="color:#CCCCCC">;</span></div>
<div class="p ln" style="top:304.56px">32</div>
<div class="p cd" style="left:37.19999999999999px;top:304.56px"><span style="color:#CCCCCC">          </span><span style="color:#DCDCAA">setIsCardVisible</span><span style="color:#DA70D6">(</span><span style="color:#569CD6">true</span><span style="color:#DA70D6">)</span><span style="color:#CCCCCC">;</span></div>
<div class="p ln" style="top:314.95px">33</div>
<div class="p cd" style="left:37.19999999999999px;top:314.95px"><span style="color:#CCCCCC">        </span><span style="color:#FFD700">}</span><span style="color:#179FFF">}</span></div>
<div class="p ln" style="top:325.35px">34</div>
<div class="p cd" style="left:37.19999999999999px;top:325.35px"><span style="color:#CCCCCC">      </span><span style="color:#808080">/&gt;</span></div>
<div class="p ln" style="top:335.74px">35</div>
<div class="p cd" style="left:37.19999999999999px;top:335.74px"></div>
<div class="p ln" style="top:346.14px">36</div>
<div class="p cd" style="left:37.19999999999999px;top:346.14px"><span style="color:#CCCCCC">      </span><span style="color:#808080">&lt;</span><span style="color:#4EC9B0">Header</span><span style="color:#CCCCCC"> </span><span style="color:#9CDCFE">onMenuClick</span><span style="color:#CCCCCC">=</span><span style="color:#179FFF">{</span><span style="color:#FFD700">()</span><span style="color:#CCCCCC"> </span><span style="color:#569CD6">=&gt;</span><span style="color:#CCCCCC"> </span><span style="color:#DCDCAA">setIsMenuOpen</span><span style="color:#FFD700">(</span><span style="color:#569CD6">true</span><span style="color:#FFD700">)</span><span style="color:#179FFF">}</span><span style="color:#CCCCCC"> </span><span style="color:#808080">/&gt;</span></div>
<div class="p ln" style="top:356.53px">37</div>
<div class="p cd" style="left:37.19999999999999px;top:356.53px"></div>
<div class="p ln" style="top:366.93px">38</div>
<div class="p cd" style="left:37.19999999999999px;top:366.93px"><span style="color:#CCCCCC">      </span><span style="color:#808080">&lt;</span><span style="color:#569CD6">main</span><span style="color:#CCCCCC"> </span><span style="color:#9CDCFE">className</span><span style="color:#CCCCCC">=</span><span style="color:#CE9178">&quot;flex-1 flex flex-col gap-4 pb-8&quot;</span><span style="color:#808080">&gt;</span></div>
<div class="p ln" style="top:377.32px">39</div>
<div class="p cd" style="left:37.19999999999999px;top:377.32px"><span style="color:#CCCCCC">        </span><span style="color:#179FFF">{</span><span style="color:#6A9955">/* Location Selector */</span><span style="color:#179FFF">}</span></div>
<div class="p ln" style="top:387.72px">40</div>
<div class="p cd" style="left:37.19999999999999px;top:387.72px"><span style="color:#CCCCCC">        </span><span style="color:#808080">&lt;</span><span style="color:#569CD6">div</span><span style="color:#CCCCCC"> </span><span style="color:#9CDCFE">className</span><span style="color:#CCCCCC">=</span><span style="color:#CE9178">&quot;px-4&quot;</span><span style="color:#808080">&gt;</span></div>
<div class="p ln" style="top:398.11px">41</div>
<div class="p cd" style="left:37.19999999999999px;top:398.11px"><span style="color:#CCCCCC">          </span><span style="color:#808080">&lt;</span><span style="color:#4EC9B0">LocationPill</span></div>
<div class="p ln" style="top:408.51px">42</div>
<div class="p cd" style="left:37.19999999999999px;top:408.51px"><span style="color:#CCCCCC">            </span><span style="color:#9CDCFE">location</span><span style="color:#CCCCCC">=</span><span style="color:#179FFF">{</span><span style="color:#4FC1FF">selectedLocation</span><span style="color:#179FFF">}</span></div>
<div class="p ln" style="top:418.90px">43</div>
<div class="p cd" style="left:37.19999999999999px;top:418.90px"><span style="color:#CCCCCC">            </span><span style="color:#9CDCFE">onClick</span><span style="color:#CCCCCC">=</span><span style="color:#179FFF">{</span><span style="color:#FFD700">()</span><span style="color:#CCCCCC"> </span><span style="color:#569CD6">=&gt;</span><span style="color:#CCCCCC"> </span><span style="color:#DCDCAA">setIsMenuOpen</span><span style="color:#FFD700">(</span><span style="color:#569CD6">true</span><span style="color:#FFD700">)</span><span style="color:#179FFF">}</span></div>
<div class="p ln" style="top:429.30px">44</div>
<div class="p cd" style="left:37.19999999999999px;top:429.30px"><span style="color:#CCCCCC">          </span><span style="color:#808080">/&gt;</span></div>
<div class="p ln" style="top:439.69px">45</div>
<div class="p cd" style="left:37.19999999999999px;top:439.69px"><span style="color:#CCCCCC">        </span><span style="color:#808080">&lt;/</span><span style="color:#569CD6">div</span><span style="color:#808080">&gt;</span></div>
<div class="p ln" style="top:450.09px">46</div>
<div class="p cd" style="left:37.19999999999999px;top:450.09px"></div>
<div class="p ln" style="top:460.48px">47</div>
<div class="p cd" style="left:37.19999999999999px;top:460.48px"><span style="color:#CCCCCC">        </span><span style="color:#179FFF">{</span><span style="color:#6A9955">/* Video Player */</span><span style="color:#179FFF">}</span></div>
<div class="p ln" style="top:470.88px">48</div>
<div class="p cd" style="left:37.19999999999999px;top:470.88px"><span style="color:#CCCCCC">        </span><span style="color:#808080">&lt;</span><span style="color:#4EC9B0">VideoCard</span></div>
</div>
<!--/CODE-->
<!--CHROME-->
<div class="p" style="left:114px;top:62.5px;width:1px;height:25.5px;background:#0078d4"></div>
<svg class="p" style="left:120.5px;top:67px" width="13" height="14.5" viewBox="0 0 26 29" fill="none" stroke="#dcdcdc" stroke-width="2"><path d="M6 6.5 H4.5 Q2.5 6.5 2.5 8.5 V25.5 Q2.5 27.5 4.5 27.5 H17.5 Q19.5 27.5 19.5 25.5 V24.5"/><path d="M6 3.5 Q6 2 7.5 2 H16.5 L23.5 9 V22.5 Q23.5 24 22 24 H7.5 Q6 24 6 22.5 Z" fill="#1a1a1a"/><path d="M16.5 2.5 V7.5 Q16.5 9 18 9 H23" fill="#dcdcdc"/></svg>
<svg class="p" style="left:121px;top:95px" width="13" height="13.5" viewBox="0 0 26 27" fill="none" stroke="#9a9a9a" stroke-width="1.9"><circle cx="11" cy="11" r="8.5"/><path d="M17 17.5 L24.5 25.5"/></svg>
<svg class="p" style="left:121.5px;top:121.5px" width="12" height="15" viewBox="0 0 24 30" fill="none" stroke="#9a9a9a" stroke-width="1.9"><circle cx="5" cy="4.5" r="3.2"/><circle cx="5" cy="25.5" r="3.2"/><circle cx="19" cy="12" r="3.2"/><path d="M5 7.7 V22.3 M19 15.2 Q19 20 12 21 Q6 22 5.5 22.5"/></svg>
<svg class="p" style="left:120.5px;top:151.5px" width="14" height="13.5" viewBox="0 0 28 27" fill="none" stroke="#9a9a9a" stroke-width="1.9"><path d="M10 3 L26 12.5 L13 20"/><path d="M10 3 V11"/><circle cx="7.5" cy="19" r="5"/><path d="M2 15 L4 16.5 M13 15 L11 16.5 M1.5 19.5 H3 M12 19.5 H13.5 M2.5 24.5 L4 23 M12.5 24.5 L11 23"/></svg>
<svg class="p" style="left:121px;top:178.5px" width="13" height="13.5" viewBox="0 0 26 27" fill="none" stroke="#9a9a9a" stroke-width="1.9"><path d="M2 8 H11 V25 H2 Z M2 16.5 H19 V25 H11"/><path d="M14.5 7 L19.5 2 L24.5 7 L19.5 12 Z"/></svg>
<svg class="p" style="left:121px;top:527px" width="13" height="13" viewBox="0 0 26 26" fill="none" stroke="#9a9a9a" stroke-width="1.8"><circle cx="13" cy="13" r="11.5"/><circle cx="13" cy="9.5" r="3.2" fill="#9a9a9a"/><path d="M6.5 15.5 H19.5 Q19.5 20 13 20 Q6.5 20 6.5 15.5Z" fill="#9a9a9a"/></svg>
<svg class="p" style="left:121px;top:555px" width="13" height="13" viewBox="0 0 26 26" fill="none" stroke="#9a9a9a" stroke-width="1.7"><path d="M11 2 H15 L15.8 5.2 L18.6 6.8 L21.8 5.9 L23.8 9.3 L21.4 11.6 V14.4 L23.8 16.7 L21.8 20.1 L18.6 19.2 L15.8 20.8 L15 24 H11 L10.2 20.8 L7.4 19.2 L4.2 20.1 L2.2 16.7 L4.6 14.4 V11.6 L2.2 9.3 L4.2 5.9 L7.4 6.8 L10.2 5.2 Z"/><circle cx="13" cy="13" r="2.8"/></svg>
<div class="p" style="left:376.5px;top:60px;width:1px;height:19.5px;background:#2b2b2b"></div>
<div class="p" style="left:453.5px;top:60px;width:1px;height:19.5px;background:#2b2b2b"></div>
<div class="p" style="left:454.5px;top:60px;width:68.5px;height:20px;background:#1f1f1f"></div>
<div class="p" style="left:523px;top:60px;width:1px;height:19.5px;background:#2b2b2b"></div>
<svg class="p" style="left:283px;top:66.5px" width="7" height="7" viewBox="0 0 14 14" fill="none" stroke="#519aba"><circle cx="7" cy="7" r="3.6" stroke-width="2.6"/><g fill="#519aba" stroke="none"><circle cx="7" cy="1.6" r="1.2"/><circle cx="7" cy="12.4" r="1.2"/><circle cx="2.3" cy="4.3" r="1.2"/><circle cx="11.7" cy="4.3" r="1.2"/><circle cx="2.3" cy="9.7" r="1.2"/><circle cx="11.7" cy="9.7" r="1.2"/></g></svg>
<div class="p tb" style="left:293px;top:66px;color:#8b8b8b">WildlifeInfoCard.tsx</div>
<div class="p" style="left:385.5px;top:67px;font-size:5.4px;line-height:7px;font-weight:bold;color:#519aba;letter-spacing:-0.2px">TS</div>
<div class="p tb" style="left:397px;top:66px;color:#8b8b8b;font-style:italic">locations.ts</div>
<svg class="p" style="left:462px;top:66.5px" width="7" height="7" viewBox="0 0 14 14" fill="none" stroke="#519aba"><circle cx="7" cy="7" r="3.6" stroke-width="2.6"/><g fill="#519aba" stroke="none"><circle cx="7" cy="1.6" r="1.2"/><circle cx="7" cy="12.4" r="1.2"/><circle cx="2.3" cy="4.3" r="1.2"/><circle cx="11.7" cy="4.3" r="1.2"/><circle cx="2.3" cy="9.7" r="1.2"/><circle cx="11.7" cy="9.7" r="1.2"/></g></svg>
<div class="p tb" style="left:472.5px;top:66px;color:#ffffff">App.tsx</div>
<svg class="p" style="left:511.5px;top:67px" width="6.5" height="6.5" viewBox="0 0 13 13" stroke="#c0c0c0" stroke-width="1.3"><path d="M1.5 1.5 L11.5 11.5 M11.5 1.5 L1.5 11.5"/></svg>
<svg class="p" style="left:678.5px;top:69px" width="7" height="2" viewBox="0 0 14 4" fill="#c8c8c8"><circle cx="2" cy="2" r="1.3"/><circle cx="7" cy="2" r="1.3"/><circle cx="12" cy="2" r="1.3"/></svg>
<div class="p tb" style="left:284px;top:82.5px;color:#a9a9a9">src</div>
<svg class="p" style="left:297px;top:83.5px" width="4" height="6" viewBox="0 0 8 12" fill="none" stroke="#a8a8a8" stroke-width="1.4"><path d="M2 1.5 L6.5 6 L2 10.5"/></svg>
<svg class="p" style="left:306.5px;top:83px" width="7" height="7" viewBox="0 0 14 14" fill="none" stroke="#519aba"><circle cx="7" cy="7" r="3.6" stroke-width="2.6"/><g fill="#519aba" stroke="none"><circle cx="7" cy="1.6" r="1.2"/><circle cx="7" cy="12.4" r="1.2"/><circle cx="2.3" cy="4.3" r="1.2"/><circle cx="11.7" cy="4.3" r="1.2"/><circle cx="2.3" cy="9.7" r="1.2"/><circle cx="11.7" cy="9.7" r="1.2"/></g></svg>
<div class="p tb" style="left:317px;top:82.5px;color:#a9a9a9">App.tsx</div>
<svg class="p" style="left:345.5px;top:83.5px" width="4" height="6" viewBox="0 0 8 12" fill="none" stroke="#a8a8a8" stroke-width="1.4"><path d="M2 1.5 L6.5 6 L2 10.5"/></svg>
<div class="p tb" style="left:352.5px;top:82.5px;color:#a9a9a9">...</div>
<div class="p" style="left:696px;top:60px;width:89px;height:20px;background:#1f1f1f"></div>
<div class="p" style="left:696px;top:60px;width:89px;height:1.2px;background:#0078d4"></div>
<div class="p" style="left:785px;top:60px;width:1px;height:19.5px;background:#2b2b2b"></div>
<svg class="p" style="left:705.5px;top:66.5px" width="6" height="7" viewBox="0 0 12 14" fill="#b0b0b0"><rect x="1" y="1" width="10" height="2"/><rect x="1" y="4.5" width="7" height="2"/><rect x="1" y="8" width="10" height="2"/><rect x="1" y="11" width="7" height="2"/><rect x="1" y="1" width="2.5" height="12"/></svg>
<div class="p tb" style="left:714px;top:66px;color:#ffffff">Simple Browser</div>
<svg class="p" style="left:773.5px;top:67px" width="6.5" height="6.5" viewBox="0 0 13 13" stroke="#d0d0d0" stroke-width="1.3"><path d="M1.5 1.5 L11.5 11.5 M11.5 1.5 L1.5 11.5"/></svg>
<svg class="p" style="left:939.5px;top:66px" width="9" height="9" viewBox="0 0 18 18" fill="none" stroke="#c8c8c8" stroke-width="1.4"><rect x="1.5" y="1.5" width="15" height="15" rx="2.5"/><path d="M9 1.5 V16.5"/></svg>
<div class="p" style="left:953px;top:64px;width:12.5px;height:12.5px;border-radius:3px;background:#393b52"></div>
<svg class="p" style="left:955.2px;top:65.8px" width="8" height="9" viewBox="0 0 16 18" fill="none" stroke="#c8c8d0" stroke-width="1.5"><path d="M4.5 8 V5.5 Q4.5 2 8 2 Q11.5 2 11.5 5.5 V8"/><rect x="2" y="8" width="12" height="8.5" rx="2"/><path d="M6.5 12 H9.5"/></svg>
<svg class="p" style="left:971px;top:69.5px" width="7" height="2" viewBox="0 0 14 4" fill="#c8c8c8"><circle cx="2" cy="2" r="1.3"/><circle cx="7" cy="2" r="1.3"/><circle cx="12" cy="2" r="1.3"/></svg>
<svg class="p" style="left:705.5px;top:85.5px" width="8" height="7" viewBox="0 0 16 14" fill="none" stroke="#b8b8b8" stroke-width="1.5"><path d="M1.5 7 H15 M7 1.5 L1.5 7 L7 12.5"/></svg>
<svg class="p" style="left:721px;top:85.5px" width="8" height="7" viewBox="0 0 16 14" fill="none" stroke="#b8b8b8" stroke-width="1.5"><path d="M1 7 H14.5 M9 1.5 L14.5 7 L9 12.5"/></svg>
<svg class="p" style="left:735.5px;top:85px" width="8" height="8" viewBox="0 0 16 16" fill="none" stroke="#b8b8b8" stroke-width="1.5"><path d="M4 3.5 A6 6 0 1 0 8 2"/><path d="M3 0.8 V4.5 H6.8" /></svg>
<div class="p" style="left:748px;top:83.5px;width:215px;height:12.2px;background:#2a2a2a"></div>
<div class="p tb" style="left:751px;top:85px;color:#d0d0d0;letter-spacing:0.28px">http://localhost:5173/</div>
<svg class="p" style="left:967px;top:85px" width="9" height="9" viewBox="0 0 18 18" fill="none" stroke="#c0c0c0" stroke-width="1.5"><path d="M8 2 H3 Q1.5 2 1.5 3.5 V15 Q1.5 16.5 3 16.5 H14.5 Q16 16.5 16 15 V10"/><path d="M10 1.5 H16.5 V8 M16.5 1.5 L8 10"/></svg>
<div class="p" style="left:687.5px;top:93px;width:8px;height:1px;background:#505050"></div>
<div class="p" style="left:276px;top:93px;width:419px;height:2px;background:linear-gradient(#141414,#1f1f1f)"></div>
<svg class="p" style="left:119px;top:577.5px" width="8" height="9" viewBox="0 0 8 9" fill="none" stroke="#c8c8c8" stroke-width="0.9"><path d="M0.9 3.3 L3.9 5.6 L0.9 7.9 M7.1 0.8 L4.1 3.1 L7.1 5.4"/></svg>
<svg class="p" style="left:137.3px;top:577.3px" width="8.6" height="8.6" viewBox="0 0 16 16" fill="none" stroke="#c8c8c8" stroke-width="1.3"><circle cx="8" cy="8" r="6.8"/><path d="M5 5 L11 11 M11 5 L5 11" stroke-width="1.4"/></svg>
<div class="p" style="left:147.6px;top:577.6px;font-size:7.8px;line-height:8px;color:#c8c8c8">0</div>
<svg class="p" style="left:154.3px;top:577.3px" width="9" height="8.4" viewBox="0 0 18 16" fill="none" stroke="#c8c8c8" stroke-width="1.4"><path d="M9 1.5 L16.5 14.5 H1.5 Z"/><path d="M9 6 V10 M9 11.5 V12.8"/></svg>
<div class="p" style="left:166px;top:577.6px;font-size:7.8px;line-height:8px;color:#c8c8c8">0</div>
<svg class="p" style="left:954px;top:576.5px" width="10" height="9" viewBox="0 0 20 18" fill="none" stroke="#c8c8c8" stroke-width="1.5"><path d="M4 7 Q1.5 8 1.5 11 Q1.5 16 10 16 Q18.5 16 18.5 11 Q18.5 8 16 7 Q17 2 13 2 Q10.5 2 10 4.5 Q9.5 2 7 2 Q3 2 4 7Z"/><path d="M10 9 V15 M6.5 10 V12 M13.5 10 V12"/></svg>
<svg class="p" style="left:974px;top:576.5px" width="8" height="9" viewBox="0 0 16 18" fill="none" stroke="#c8c8c8" stroke-width="1.5"><path d="M3 13 V7.5 Q3 2 8 2 Q13 2 13 7.5 V13 L14.5 14.5 H1.5 Z M6 16.5 H10"/></svg>
<!--/CHROME-->
<!--APP-->
<div class="p" style="left:0;top:0;width:1100px;height:670px;clip-path:inset(98.5px 113.5px 95px 696px)">
<div class="p" style="left:709.6px;top:113.7px;width:19.4px;height:1.2px;background:#8c4c4c"></div>
<div class="p" style="left:709.6px;top:118.9px;width:19.4px;height:1.2px;background:#8c4c4c"></div>
<div class="p" style="left:709.6px;top:124.10000000000001px;width:19.4px;height:1.2px;background:#8c4c4c"></div>
<svg class="p" style="left:951px;top:107.6px" width="24" height="24" viewBox="0 0 24 24"><defs><clipPath id="avc"><circle cx="12" cy="12" r="11.7"/></clipPath></defs><circle cx="12" cy="12" r="11.7" fill="#e8472c"/><g clip-path="url(#avc)" fill="#541414"><circle cx="12" cy="8.2" r="4.5"/><ellipse cx="12" cy="22.5" rx="8.6" ry="8.2"/></g></svg>
<div class="p" style="left:707.5px;top:129.5px;font-size:41.4px;line-height:46px;font-weight:bold;color:#541414;white-space:nowrap;transform-origin:0 0;transform:scaleX(1.245);letter-spacing:-0.9px;-webkit-text-stroke:1.1px #541414" id="t1">Wildlife</div>
<div class="p" style="left:882px;top:129.5px;font-size:41.4px;line-height:46px;font-weight:bold;font-style:italic;color:#541414;white-space:nowrap;transform-origin:0 0;transform:scaleX(1.18);letter-spacing:-0.9px;-webkit-text-stroke:1.1px #541414" id="t2">Live</div>
<div class="p" style="left:707.5px;top:179.3px;width:268.5px;height:27.3px;border:1px solid #e8472c;border-radius:14px"></div>
<div class="p" id="loc" style="left:717.5px;top:182.5px;font-size:18px;line-height:22px;font-weight:bold;color:#e8472c;white-space:nowrap;letter-spacing:-1.25px">Lamar Valley, Wyoming</div>
<!--PHOTOSTART-->
<svg class="p" style="left:708px;top:213.5px" width="268" height="172.5" viewBox="708 213.5 268 172.5">
<defs>
<clipPath id="pc"><rect x="708" y="213.5" width="268" height="172.5" rx="12"/></clipPath>
<linearGradient id="sky" x1="0" y1="0" x2="0" y2="1"><stop offset="0" stop-color="#e2e0dc"/><stop offset="1" stop-color="#e0dcd5"/></linearGradient>
<linearGradient id="meadow" x1="0" y1="0" x2="0" y2="1"><stop offset="0" stop-color="#a4b08a"/><stop offset="0.5" stop-color="#9cab80"/><stop offset="1" stop-color="#a2ae88"/></linearGradient>
<linearGradient id="brush" x1="0" y1="0" x2="0" y2="1"><stop offset="0" stop-color="#adb5a5"/><stop offset="0.5" stop-color="#9ca88f"/><stop offset="1" stop-color="#95a287"/></linearGradient>
<filter id="soft"><feGaussianBlur stdDeviation="0.7"/></filter><filter id="tex" x="0" y="0" width="100%" height="100%"><feTurbulence type="fractalNoise" baseFrequency="0.16" numOctaves="3" seed="3" result="n"/><feColorMatrix in="n" values="0 0 0 0 0.9  0 0 0 0 0.93  0 0 0 0 0.88  0 0 0 1.8 -0.7" result="m"/><feComposite in="m" in2="SourceAlpha" operator="in"/></filter>
<filter id="tex2" x="0" y="0" width="100%" height="100%"><feTurbulence type="fractalNoise" baseFrequency="0.22" numOctaves="2" seed="9" result="n"/><feColorMatrix in="n" values="0 0 0 0 0.35  0 0 0 0 0.45  0 0 0 0 0.3  0 0 0 -3 1.3" result="m"/><feComposite in="m" in2="SourceAlpha" operator="in"/></filter>
</defs>
<g clip-path="url(#pc)">
<rect x="708" y="213.5" width="268" height="172.5" fill="url(#sky)"/>
<!-- distant pale hill right -->
<g filter="url(#soft)">
<path d="M835 248 Q860 245 885 247 Q910 246 930 249 Q950 253 976 253 L976 290 L835 290Z" fill="#d4c7b9"/>
<!-- right green hills -->
<path d="M880 259 Q905 254 930 255 Q955 252 976 251 L976 290 L875 290Z" fill="#b4bca5"/>
<ellipse cx="950" cy="258" rx="6" ry="2.5" fill="#8d9c80"/>
<ellipse cx="968" cy="256" rx="5" ry="2.5" fill="#8d9c80"/>
<!-- golden hill left -->
<path d="M708 228 Q735 226 765 235 Q800 242 835 244 Q860 246 880 250 Q890 254 895 258 L895 290 L708 290Z" fill="#c9ac72"/>
<path d="M708 237 Q745 237 790 243 Q830 247 875 250 L880 252 L708 251Z" fill="#a48f5e" opacity="0.5"/>
<path d="M708 247 Q780 247 870 251 L870 254 L708 253Z" fill="#d6b577"/>
<!-- tree band -->
<path d="M708 251 Q760 249 800 251 Q840 252 870 253 Q885 254 893 258 Q890 264 880 266 Q850 266 800 265 Q750 264 708 265Z" fill="#6a5e38"/>
<path d="M770 253 Q830 253 870 254 Q886 256 893 258 Q890 264 880 266 Q840 267 770 265Z" fill="#4e5c38" opacity="0.9"/>
<path d="M708 252 Q735 251 760 253 L760 264 Q735 265 708 265Z" fill="#8e6c3e" opacity="0.8"/>
<!-- orange slope below trees -->
<path d="M708 264 Q760 264 800 265 Q850 266 880 266 Q872 274 870 281 L708 281Z" fill="#c39a6a"/>
<path d="M785 265 Q815 265 845 266 L842 281 L790 281Z" fill="#7b7049" opacity="0.7"/>
<path d="M708 270 Q750 272 785 276 L785 281 L708 281Z" fill="#a8a07a" opacity="0.55"/>
<path d="M850 266 Q872 265 882 264 Q876 272 874 281 L845 281Z" fill="#b29870" opacity="0.8"/>
<path d="M870 262 Q900 262 976 262 L976 281 L866 281Z" fill="#aeb89e"/>
</g>
<path d="M767.9 253.5 L768.6 259.8 L767.3 259.8Z" fill="#8d6a3c" opacity="0.85"/>
<path d="M775.7 252.5 L776.3 258.0 L775.0 258.0Z" fill="#55623f" opacity="0.85"/>
<path d="M720.9 252.2 L722.2 257.4 L719.7 257.4Z" fill="#6d5a36" opacity="0.85"/>
<path d="M749.3 259.0 L750.4 266.8 L748.2 266.8Z" fill="#6d5a36" opacity="0.85"/>
<path d="M888.6 253.7 L889.4 261.0 L887.8 261.0Z" fill="#55623f" opacity="0.85"/>
<path d="M729.8 255.0 L730.5 262.0 L729.0 262.0Z" fill="#8d6a3c" opacity="0.85"/>
<path d="M826.2 256.9 L826.8 262.6 L825.5 262.6Z" fill="#55623f" opacity="0.85"/>
<path d="M746.1 259.6 L747.0 264.8 L745.3 264.8Z" fill="#8d6a3c" opacity="0.85"/>
<path d="M791.8 255.6 L793.0 262.6 L790.7 262.6Z" fill="#55623f" opacity="0.85"/>
<path d="M814.3 258.6 L815.5 266.0 L813.1 266.0Z" fill="#55623f" opacity="0.85"/>
<path d="M889.3 254.6 L890.5 259.7 L888.1 259.7Z" fill="#55623f" opacity="0.85"/>
<path d="M798.5 252.6 L799.7 258.9 L797.2 258.9Z" fill="#6d6a42" opacity="0.85"/>
<path d="M870.0 256.7 L871.0 263.2 L868.9 263.2Z" fill="#6d6a42" opacity="0.85"/>
<path d="M792.4 262.1 L793.4 269.8 L791.4 269.8Z" fill="#6d6a42" opacity="0.85"/>
<path d="M719.2 259.6 L720.6 265.8 L717.8 265.8Z" fill="#5a6040" opacity="0.85"/>
<path d="M760.7 256.3 L761.3 262.6 L760.0 262.6Z" fill="#6d5a36" opacity="0.85"/>
<path d="M739.1 252.8 L740.3 256.1 L737.9 256.1Z" fill="#6d5a36" opacity="0.85"/>
<path d="M753.8 256.2 L754.5 263.6 L753.1 263.6Z" fill="#6d5a36" opacity="0.85"/>
<path d="M809.6 262.8 L810.9 269.9 L808.4 269.9Z" fill="#55623f" opacity="0.85"/>
<path d="M784.8 256.2 L786.2 263.6 L783.5 263.6Z" fill="#55623f" opacity="0.85"/>
<path d="M740.6 254.2 L741.6 258.3 L739.6 258.3Z" fill="#8d6a3c" opacity="0.85"/>
<path d="M756.6 251.6 L757.5 256.7 L755.7 256.7Z" fill="#8d6a3c" opacity="0.85"/>
<path d="M884.3 261.4 L885.4 267.0 L883.2 267.0Z" fill="#6d6a42" opacity="0.85"/>
<path d="M718.0 261.9 L719.3 268.8 L716.7 268.8Z" fill="#8d6a3c" opacity="0.85"/>
<path d="M780.6 256.7 L781.7 260.2 L779.5 260.2Z" fill="#55623f" opacity="0.85"/>
<path d="M720.5 253.7 L721.3 257.5 L719.6 257.5Z" fill="#6d5a36" opacity="0.85"/>
<path d="M708.0 252.8 L708.9 256.3 L707.2 256.3Z" fill="#6d5a36" opacity="0.85"/>
<path d="M869.8 260.3 L870.6 264.1 L868.9 264.1Z" fill="#55623f" opacity="0.85"/>
<path d="M775.4 253.3 L776.8 260.5 L774.0 260.5Z" fill="#55623f" opacity="0.85"/>
<path d="M797.5 253.1 L798.4 256.6 L796.6 256.6Z" fill="#55623f" opacity="0.85"/>
<path d="M861.3 254.8 L862.7 257.9 L860.0 257.9Z" fill="#55623f" opacity="0.85"/>
<path d="M735.1 257.8 L736.1 261.0 L734.1 261.0Z" fill="#5a6040" opacity="0.85"/>
<path d="M867.7 261.3 L868.6 265.6 L866.8 265.6Z" fill="#55623f" opacity="0.85"/>
<path d="M850.8 259.1 L851.7 266.0 L849.9 266.0Z" fill="#55623f" opacity="0.85"/>
<path d="M858.1 264.6 L859.4 271.9 L856.9 271.9Z" fill="#8a6c40" opacity="0.85"/>
<path d="M844.9 255.4 L845.8 261.0 L844.0 261.0Z" fill="#55623f" opacity="0.85"/>
<path d="M713.2 254.4 L714.3 258.7 L712.0 258.7Z" fill="#5a6040" opacity="0.85"/>
<path d="M790.7 263.2 L792.1 271.2 L789.4 271.2Z" fill="#55623f" opacity="0.85"/>
<path d="M748.8 254.2 L749.5 258.2 L748.0 258.2Z" fill="#8d6a3c" opacity="0.85"/>
<path d="M874.6 263.1 L875.7 268.5 L873.4 268.5Z" fill="#6d6a42" opacity="0.85"/>
<path d="M723.7 259.1 L724.9 266.7 L722.5 266.7Z" fill="#8d6a3c" opacity="0.85"/>
<path d="M796.4 254.2 L797.3 261.1 L795.6 261.1Z" fill="#8a6c40" opacity="0.85"/>
<path d="M887.8 257.9 L889.1 262.9 L886.4 262.9Z" fill="#6d6a42" opacity="0.85"/>
<path d="M739.5 252.9 L740.8 256.7 L738.1 256.7Z" fill="#5a6040" opacity="0.85"/>
<path d="M735.0 261.2 L736.2 269.1 L733.9 269.1Z" fill="#6d5a36" opacity="0.85"/>
<path d="M809.5 253.8 L810.9 256.9 L808.1 256.9Z" fill="#6d6a42" opacity="0.85"/>
<path d="M805.4 263.4 L806.7 268.5 L804.1 268.5Z" fill="#8a6c40" opacity="0.85"/>
<path d="M747.0 254.5 L747.8 259.0 L746.3 259.0Z" fill="#8d6a3c" opacity="0.85"/>
<path d="M756.0 256.6 L757.3 260.3 L754.7 260.3Z" fill="#6d5a36" opacity="0.85"/>
<path d="M792.8 259.0 L793.7 266.5 L791.8 266.5Z" fill="#8a6c40" opacity="0.85"/>
<path d="M800.8 258.5 L801.4 264.1 L800.2 264.1Z" fill="#55623f" opacity="0.85"/>
<path d="M741.9 251.5 L742.6 258.4 L741.1 258.4Z" fill="#6d5a36" opacity="0.85"/>
<path d="M842.2 259.3 L843.2 263.9 L841.1 263.9Z" fill="#6d6a42" opacity="0.85"/>
<path d="M853.1 254.0 L853.9 259.8 L852.3 259.8Z" fill="#55623f" opacity="0.85"/>
<path d="M850.9 258.8 L852.1 264.6 L849.7 264.6Z" fill="#8a6c40" opacity="0.85"/>
<path d="M790.0 259.3 L791.0 264.9 L789.0 264.9Z" fill="#6d6a42" opacity="0.85"/>
<path d="M791.7 258.4 L793.0 263.8 L790.3 263.8Z" fill="#6d6a42" opacity="0.85"/>
<path d="M870.2 264.3 L871.2 268.6 L869.1 268.6Z" fill="#8a6c40" opacity="0.85"/>
<path d="M863.4 254.5 L864.4 258.1 L862.4 258.1Z" fill="#55623f" opacity="0.85"/>
<path d="M752.5 252.4 L753.7 258.8 L751.3 258.8Z" fill="#5a6040" opacity="0.85"/>
<path d="M736.6 259.9 L737.3 266.2 L735.9 266.2Z" fill="#5a6040" opacity="0.85"/>
<path d="M887.0 255.8 L887.9 263.5 L886.1 263.5Z" fill="#55623f" opacity="0.85"/>
<path d="M891.1 263.2 L892.1 267.0 L890.2 267.0Z" fill="#55623f" opacity="0.85"/>
<path d="M770.7 254.1 L771.9 258.7 L769.6 258.7Z" fill="#55623f" opacity="0.85"/>
<path d="M810.5 257.5 L811.4 260.6 L809.6 260.6Z" fill="#6d6a42" opacity="0.85"/>
<path d="M802.8 252.9 L804.0 260.8 L801.5 260.8Z" fill="#8a6c40" opacity="0.85"/>
<path d="M727.4 254.4 L728.6 257.6 L726.2 257.6Z" fill="#6d5a36" opacity="0.85"/>
<path d="M732.0 256.4 L733.2 263.9 L730.7 263.9Z" fill="#6d5a36" opacity="0.85"/>
<path d="M735.6 262.4 L736.8 268.2 L734.5 268.2Z" fill="#6d5a36" opacity="0.85"/>
<path d="M718.6 259.4 L719.3 264.5 L718.0 264.5Z" fill="#5a6040" opacity="0.85"/>
<path d="M825.4 262.0 L826.7 265.4 L824.1 265.4Z" fill="#55623f" opacity="0.85"/>
<path d="M867.6 258.4 L868.7 263.1 L866.6 263.1Z" fill="#8a6c40" opacity="0.85"/>
<path d="M757.6 253.1 L758.3 258.8 L756.8 258.8Z" fill="#6d5a36" opacity="0.85"/>
<path d="M737.9 252.0 L738.7 256.0 L737.0 256.0Z" fill="#6d5a36" opacity="0.85"/>
<path d="M848.5 256.2 L849.2 261.7 L847.8 261.7Z" fill="#55623f" opacity="0.85"/>
<path d="M711.4 254.0 L712.5 257.1 L710.2 257.1Z" fill="#8d6a3c" opacity="0.85"/>
<path d="M743.0 257.1 L743.7 264.8 L742.4 264.8Z" fill="#5a6040" opacity="0.85"/>
<path d="M788.0 257.9 L788.9 265.1 L787.0 265.1Z" fill="#55623f" opacity="0.85"/>
<path d="M835.2 264.3 L836.5 269.0 L834.0 269.0Z" fill="#6d6a42" opacity="0.85"/>
<path d="M825.7 257.3 L826.3 262.0 L825.0 262.0Z" fill="#55623f" opacity="0.85"/>
<path d="M721.1 260.0 L721.8 264.3 L720.4 264.3Z" fill="#6d5a36" opacity="0.85"/>
<path d="M863.6 263.3 L864.5 269.7 L862.8 269.7Z" fill="#55623f" opacity="0.85"/>
<path d="M762.2 257.2 L763.2 261.0 L761.3 261.0Z" fill="#6d5a36" opacity="0.85"/>
<path d="M885.9 264.8 L886.7 270.5 L885.1 270.5Z" fill="#8a6c40" opacity="0.85"/>
<path d="M765.3 256.0 L766.2 259.0 L764.4 259.0Z" fill="#6d5a36" opacity="0.85"/>
<path d="M801.0 254.5 L801.6 260.1 L800.4 260.1Z" fill="#55623f" opacity="0.85"/>
<path d="M724.6 256.0 L725.2 259.2 L724.0 259.2Z" fill="#6d5a36" opacity="0.85"/>
<path d="M751.1 258.5 L752.3 264.2 L749.9 264.2Z" fill="#8d6a3c" opacity="0.85"/>
<path d="M840.5 263.1 L841.3 268.1 L839.6 268.1Z" fill="#8a6c40" opacity="0.85"/>
<path d="M735.7 260.0 L736.3 266.2 L735.0 266.2Z" fill="#5a6040" opacity="0.85"/>
<path d="M873.0 260.5 L874.3 267.2 L871.8 267.2Z" fill="#55623f" opacity="0.85"/>
<path d="M804.9 258.2 L806.1 265.4 L803.7 265.4Z" fill="#8a6c40" opacity="0.85"/>
<path d="M816.1 263.0 L817.2 269.4 L814.9 269.4Z" fill="#55623f" opacity="0.85"/>
<path d="M713.8 252.7 L714.4 257.5 L713.1 257.5Z" fill="#5a6040" opacity="0.85"/>
<path d="M811.3 259.8 L812.5 265.9 L810.2 265.9Z" fill="#55623f" opacity="0.85"/>
<path d="M708.6 260.6 L709.6 267.3 L707.6 267.3Z" fill="#8d6a3c" opacity="0.85"/>
<path d="M830.0 253.3 L830.8 259.9 L829.2 259.9Z" fill="#55623f" opacity="0.85"/>
<path d="M757.1 260.3 L758.3 264.4 L755.9 264.4Z" fill="#5a6040" opacity="0.85"/>
<path d="M799.4 256.7 L800.5 262.1 L798.2 262.1Z" fill="#6d6a42" opacity="0.85"/>
<path d="M822.1 260.1 L822.9 263.5 L821.4 263.5Z" fill="#55623f" opacity="0.85"/>
<path d="M845.5 256.3 L846.1 262.1 L844.9 262.1Z" fill="#55623f" opacity="0.85"/>
<path d="M757.7 259.7 L758.9 266.1 L756.6 266.1Z" fill="#6d5a36" opacity="0.85"/>
<path d="M803.6 257.7 L804.3 263.1 L802.9 263.1Z" fill="#8a6c40" opacity="0.85"/>
<path d="M744.9 263.2 L745.5 270.9 L744.2 270.9Z" fill="#6d5a36" opacity="0.85"/>
<path d="M859.7 264.4 L860.5 269.7 L858.9 269.7Z" fill="#55623f" opacity="0.85"/>
<path d="M882.9 255.6 L883.6 261.5 L882.2 261.5Z" fill="#55623f" opacity="0.85"/>
<path d="M884.3 254.7 L885.3 261.8 L883.2 261.8Z" fill="#8a6c40" opacity="0.85"/>
<path d="M838.1 255.3 L839.1 262.8 L837.1 262.8Z" fill="#55623f" opacity="0.85"/>
<path d="M708.7 256.9 L709.5 262.2 L707.8 262.2Z" fill="#6d5a36" opacity="0.85"/>
<path d="M771.6 255.6 L772.2 262.8 L771.0 262.8Z" fill="#6d6a42" opacity="0.85"/>
<path d="M863.2 254.3 L864.4 261.9 L862.1 261.9Z" fill="#8a6c40" opacity="0.85"/>
<path d="M761.6 256.1 L763.0 261.1 L760.2 261.1Z" fill="#8d6a3c" opacity="0.85"/>
<path d="M774.7 256.9 L775.4 261.3 L774.1 261.3Z" fill="#55623f" opacity="0.85"/>
<path d="M862.4 256.3 L863.2 264.0 L861.6 264.0Z" fill="#55623f" opacity="0.85"/>
<path d="M802.5 254.4 L803.9 259.3 L801.2 259.3Z" fill="#8a6c40" opacity="0.85"/>
<path d="M858.2 260.4 L859.6 267.9 L856.9 267.9Z" fill="#55623f" opacity="0.85"/>
<path d="M841.1 253.2 L842.1 259.9 L840.2 259.9Z" fill="#6d6a42" opacity="0.85"/>
<path d="M827.2 255.9 L828.6 259.1 L825.9 259.1Z" fill="#55623f" opacity="0.85"/>
<path d="M795.4 256.2 L796.5 260.7 L794.2 260.7Z" fill="#8a6c40" opacity="0.85"/>
<path d="M756.1 259.4 L757.2 264.0 L755.1 264.0Z" fill="#6d5a36" opacity="0.85"/>
<path d="M739.0 253.3 L740.3 257.4 L737.6 257.4Z" fill="#6d5a36" opacity="0.85"/>
<path d="M748.7 262.4 L749.7 270.3 L747.7 270.3Z" fill="#6d5a36" opacity="0.85"/>
<path d="M743.6 252.5 L744.3 257.2 L742.9 257.2Z" fill="#6d5a36" opacity="0.85"/>
<path d="M755.8 258.4 L757.0 265.8 L754.6 265.8Z" fill="#6d5a36" opacity="0.85"/>
<path d="M784.6 258.2 L785.4 263.1 L783.7 263.1Z" fill="#55623f" opacity="0.85"/>
<path d="M759.3 263.2 L760.3 266.9 L758.3 266.9Z" fill="#8d6a3c" opacity="0.85"/>
<path d="M867.6 255.5 L868.4 259.9 L866.8 259.9Z" fill="#55623f" opacity="0.85"/>
<path d="M790.5 263.4 L791.8 270.7 L789.2 270.7Z" fill="#55623f" opacity="0.85"/>
<path d="M714.0 259.6 L714.9 267.1 L713.0 267.1Z" fill="#8d6a3c" opacity="0.85"/>
<path d="M708.0 255.7 L709.3 263.3 L706.8 263.3Z" fill="#5a6040" opacity="0.85"/>
<path d="M887.9 256.1 L888.6 259.7 L887.1 259.7Z" fill="#55623f" opacity="0.85"/>
<path d="M834.2 263.8 L835.3 270.4 L833.1 270.4Z" fill="#6d6a42" opacity="0.85"/>
<path d="M792.6 258.6 L793.8 261.8 L791.4 261.8Z" fill="#55623f" opacity="0.85"/>
<path d="M878.2 260.8 L878.9 265.3 L877.5 265.3Z" fill="#55623f" opacity="0.85"/>
<path d="M825.7 260.8 L826.4 264.4 L825.1 264.4Z" fill="#55623f" opacity="0.85"/>
<path d="M815.8 257.0 L816.9 261.1 L814.8 261.1Z" fill="#55623f" opacity="0.85"/>
<path d="M763.8 257.2 L764.9 265.0 L762.7 265.0Z" fill="#5a6040" opacity="0.85"/>
<path d="M795.9 254.9 L797.3 259.1 L794.6 259.1Z" fill="#6d6a42" opacity="0.85"/>
<path d="M764.9 251.9 L766.0 257.4 L763.7 257.4Z" fill="#6d5a36" opacity="0.85"/>
<path d="M755.6 259.6 L756.4 267.2 L754.8 267.2Z" fill="#6d5a36" opacity="0.85"/>
<path d="M770.5 256.8 L771.3 263.2 L769.8 263.2Z" fill="#6d6a42" opacity="0.85"/>
<path d="M844.7 258.7 L846.1 262.7 L843.4 262.7Z" fill="#55623f" opacity="0.85"/>
<path d="M859.7 255.6 L860.9 259.7 L858.5 259.7Z" fill="#55623f" opacity="0.85"/>
<path d="M884.1 259.1 L884.9 263.0 L883.3 263.0Z" fill="#55623f" opacity="0.85"/>
<path d="M831.1 263.9 L832.0 267.6 L830.2 267.6Z" fill="#55623f" opacity="0.85"/>
<path d="M888.2 254.9 L888.9 258.1 L887.6 258.1Z" fill="#55623f" opacity="0.85"/>
<path d="M874.2 263.6 L875.6 270.3 L872.8 270.3Z" fill="#8a6c40" opacity="0.85"/>
<path d="M768.9 254.0 L770.1 261.6 L767.7 261.6Z" fill="#6d5a36" opacity="0.85"/>
<path d="M830.9 257.0 L831.8 261.9 L830.1 261.9Z" fill="#55623f" opacity="0.85"/>
<path d="M708.5 254.4 L709.9 259.1 L707.2 259.1Z" fill="#6d5a36" opacity="0.85"/>
<path d="M842.9 268.3 L844.2 272.7 L841.5 272.7Z" fill="#6a6a44" opacity="0.8"/>
<path d="M834.3 270.8 L835.4 274.0 L833.2 274.0Z" fill="#6a6a44" opacity="0.8"/>
<path d="M807.4 276.1 L808.4 279.9 L806.3 279.9Z" fill="#6a6a44" opacity="0.8"/>
<path d="M838.8 266.3 L840.2 271.0 L837.5 271.0Z" fill="#6a6a44" opacity="0.8"/>
<path d="M831.0 266.4 L831.8 269.6 L830.2 269.6Z" fill="#6a6a44" opacity="0.8"/>
<path d="M840.2 268.8 L841.6 274.8 L838.8 274.8Z" fill="#6a6a44" opacity="0.8"/>
<path d="M805.3 269.0 L806.6 275.8 L804.1 275.8Z" fill="#6a6a44" opacity="0.8"/>
<path d="M800.7 273.9 L801.7 278.1 L799.8 278.1Z" fill="#6a6a44" opacity="0.8"/>
<path d="M785.2 274.3 L786.5 281.0 L784.0 281.0Z" fill="#6a6a44" opacity="0.8"/>
<path d="M841.6 266.3 L842.7 270.2 L840.5 270.2Z" fill="#6a6a44" opacity="0.8"/>
<path d="M842.4 276.5 L843.3 281.0 L841.5 281.0Z" fill="#6a6a44" opacity="0.8"/>
<path d="M810.8 271.4 L811.7 278.1 L809.9 278.1Z" fill="#6a6a44" opacity="0.8"/>
<path d="M833.2 274.1 L834.5 280.4 L831.8 280.4Z" fill="#6a6a44" opacity="0.8"/>
<path d="M821.4 269.6 L822.5 273.9 L820.4 273.9Z" fill="#6a6a44" opacity="0.8"/>
<path d="M831.9 266.9 L833.2 270.7 L830.6 270.7Z" fill="#6a6a44" opacity="0.8"/>
<path d="M799.8 266.7 L801.0 269.8 L798.7 269.8Z" fill="#6a6a44" opacity="0.8"/>
<path d="M804.5 276.8 L806.0 283.3 L803.1 283.3Z" fill="#6a6a44" opacity="0.8"/>
<path d="M800.9 266.9 L802.0 270.3 L799.8 270.3Z" fill="#6a6a44" opacity="0.8"/>
<path d="M827.6 270.9 L828.6 274.9 L826.5 274.9Z" fill="#6a6a44" opacity="0.8"/>
<path d="M822.2 273.4 L823.6 279.4 L820.8 279.4Z" fill="#6a6a44" opacity="0.8"/>
<path d="M824.9 267.3 L825.8 273.7 L823.9 273.7Z" fill="#6a6a44" opacity="0.8"/>
<path d="M819.0 270.1 L819.9 276.1 L818.1 276.1Z" fill="#6a6a44" opacity="0.8"/>
<path d="M799.8 268.7 L801.3 272.3 L798.4 272.3Z" fill="#6a6a44" opacity="0.8"/>
<path d="M819.7 269.6 L821.2 274.2 L818.2 274.2Z" fill="#6a6a44" opacity="0.8"/>
<path d="M815.4 268.5 L816.7 274.8 L814.2 274.8Z" fill="#6a6a44" opacity="0.8"/>
<path d="M844.5 267.1 L845.8 272.0 L843.1 272.0Z" fill="#6a6a44" opacity="0.8"/>
<path d="M835.4 276.1 L836.4 279.2 L834.5 279.2Z" fill="#6a6a44" opacity="0.8"/>
<path d="M792.2 268.1 L793.3 275.0 L791.0 275.0Z" fill="#6a6a44" opacity="0.8"/>
<path d="M840.8 270.1 L841.9 276.6 L839.7 276.6Z" fill="#6a6a44" opacity="0.8"/>
<path d="M800.6 274.6 L801.4 281.3 L799.8 281.3Z" fill="#6a6a44" opacity="0.8"/>
<path d="M820.8 272.8 L821.8 276.7 L819.7 276.7Z" fill="#6a6a44" opacity="0.8"/>
<path d="M793.5 268.2 L794.7 272.3 L792.3 272.3Z" fill="#6a6a44" opacity="0.8"/>
<path d="M824.1 268.2 L825.1 271.3 L823.1 271.3Z" fill="#6a6a44" opacity="0.8"/>
<path d="M825.7 268.0 L826.6 272.3 L824.8 272.3Z" fill="#6a6a44" opacity="0.8"/>
<path d="M832.7 272.0 L833.5 275.3 L831.9 275.3Z" fill="#6a6a44" opacity="0.8"/>
<path d="M808.7 272.1 L809.5 277.6 L807.9 277.6Z" fill="#6a6a44" opacity="0.8"/>
<path d="M794.8 273.6 L795.8 278.3 L793.9 278.3Z" fill="#6a6a44" opacity="0.8"/>
<path d="M803.5 276.5 L804.6 280.7 L802.3 280.7Z" fill="#6a6a44" opacity="0.8"/>
<path d="M806.4 270.6 L807.9 277.0 L804.9 277.0Z" fill="#6a6a44" opacity="0.8"/>
<path d="M806.8 268.2 L807.7 274.1 L805.9 274.1Z" fill="#6a6a44" opacity="0.8"/>
<ellipse cx="880.1" cy="264.8" rx="1.6" ry="2.4" fill="#4f5e3e" opacity="0.85"/>
<ellipse cx="890.6" cy="263.8" rx="1.6" ry="2.4" fill="#4f5e3e" opacity="0.85"/>
<ellipse cx="890.2" cy="264.6" rx="1.6" ry="2.4" fill="#4f5e3e" opacity="0.85"/>
<ellipse cx="891.5" cy="256.0" rx="1.6" ry="2.4" fill="#4f5e3e" opacity="0.85"/>
<ellipse cx="880.4" cy="260.6" rx="1.6" ry="2.4" fill="#4f5e3e" opacity="0.85"/>
<ellipse cx="896.0" cy="264.9" rx="1.6" ry="2.4" fill="#4f5e3e" opacity="0.85"/>
<ellipse cx="882.2" cy="261.5" rx="1.6" ry="2.4" fill="#4f5e3e" opacity="0.85"/>
<ellipse cx="889.3" cy="260.1" rx="1.6" ry="2.4" fill="#4f5e3e" opacity="0.85"/>
<ellipse cx="883.6" cy="257.4" rx="1.6" ry="2.4" fill="#4f5e3e" opacity="0.85"/>
<ellipse cx="893.0" cy="265.1" rx="1.6" ry="2.4" fill="#4f5e3e" opacity="0.85"/>
<ellipse cx="882.7" cy="259.9" rx="1.6" ry="2.4" fill="#4f5e3e" opacity="0.85"/>
<ellipse cx="900.1" cy="265.6" rx="1.6" ry="2.4" fill="#4f5e3e" opacity="0.85"/>
<ellipse cx="884.9" cy="255.5" rx="1.6" ry="2.4" fill="#4f5e3e" opacity="0.85"/>
<ellipse cx="903.6" cy="265.7" rx="1.6" ry="2.4" fill="#4f5e3e" opacity="0.85"/>
<ellipse cx="892.1" cy="254.6" rx="1.6" ry="2.4" fill="#4f5e3e" opacity="0.85"/>
<ellipse cx="903.2" cy="258.7" rx="1.6" ry="2.4" fill="#4f5e3e" opacity="0.85"/>
<ellipse cx="902.6" cy="261.4" rx="1.6" ry="2.4" fill="#4f5e3e" opacity="0.85"/>
<ellipse cx="900.6" cy="255.9" rx="1.6" ry="2.4" fill="#4f5e3e" opacity="0.85"/>
<ellipse cx="899.6" cy="256.7" rx="1.6" ry="2.4" fill="#4f5e3e" opacity="0.85"/>
<ellipse cx="890.1" cy="264.2" rx="1.6" ry="2.4" fill="#4f5e3e" opacity="0.85"/>
<ellipse cx="900.7" cy="256.2" rx="1.6" ry="2.4" fill="#4f5e3e" opacity="0.85"/>
<ellipse cx="885.5" cy="258.8" rx="1.6" ry="2.4" fill="#4f5e3e" opacity="0.85"/>
<ellipse cx="892.9" cy="258.6" rx="1.6" ry="2.4" fill="#4f5e3e" opacity="0.85"/>
<ellipse cx="883.1" cy="257.0" rx="1.6" ry="2.4" fill="#4f5e3e" opacity="0.85"/>
<ellipse cx="898.1" cy="264.8" rx="1.6" ry="2.4" fill="#4f5e3e" opacity="0.85"/>
<ellipse cx="881.0" cy="260.7" rx="1.6" ry="2.4" fill="#4f5e3e" opacity="0.85"/>
<ellipse cx="898.9" cy="254.5" rx="1.6" ry="2.4" fill="#4f5e3e" opacity="0.85"/>
<ellipse cx="901.0" cy="255.4" rx="1.6" ry="2.4" fill="#4f5e3e" opacity="0.85"/>
<ellipse cx="895.0" cy="260.6" rx="1.6" ry="2.4" fill="#4f5e3e" opacity="0.85"/>
<ellipse cx="895.7" cy="257.7" rx="1.6" ry="2.4" fill="#4f5e3e" opacity="0.85"/>
<ellipse cx="775.2" cy="248.0" rx="3.3" ry="1.6" fill="#9e8c5a" opacity="0.45"/>
<ellipse cx="779.5" cy="246.2" rx="2.1" ry="1.5" fill="#9e8c5a" opacity="0.45"/>
<ellipse cx="786.3" cy="243.6" rx="4.3" ry="1.7" fill="#9e8c5a" opacity="0.45"/>
<ellipse cx="781.3" cy="242.2" rx="3.4" ry="0.9" fill="#9e8c5a" opacity="0.45"/>
<ellipse cx="728.6" cy="240.9" rx="2.3" ry="1.3" fill="#9e8c5a" opacity="0.45"/>
<ellipse cx="789.6" cy="240.8" rx="3.9" ry="0.9" fill="#9e8c5a" opacity="0.45"/>
<ellipse cx="825.4" cy="256.2" rx="3.5" ry="0.9" fill="#9e8c5a" opacity="0.45"/>
<ellipse cx="788.6" cy="246.1" rx="4.9" ry="1.0" fill="#9e8c5a" opacity="0.45"/>
<ellipse cx="845.1" cy="261.7" rx="4.2" ry="1.8" fill="#9e8c5a" opacity="0.45"/>
<ellipse cx="739.0" cy="250.8" rx="3.5" ry="1.9" fill="#9e8c5a" opacity="0.45"/>
<ellipse cx="854.6" cy="249.3" rx="4.4" ry="1.9" fill="#9e8c5a" opacity="0.45"/>
<ellipse cx="718.5" cy="238.7" rx="4.3" ry="1.0" fill="#9e8c5a" opacity="0.45"/>
<ellipse cx="851.4" cy="250.7" rx="4.4" ry="1.0" fill="#9e8c5a" opacity="0.45"/>
<ellipse cx="788.4" cy="254.8" rx="2.6" ry="1.1" fill="#9e8c5a" opacity="0.45"/>
<ellipse cx="789.0" cy="245.2" rx="2.1" ry="1.0" fill="#9e8c5a" opacity="0.45"/>
<ellipse cx="733.8" cy="249.6" rx="4.0" ry="1.9" fill="#9e8c5a" opacity="0.45"/>
<ellipse cx="735.0" cy="247.3" rx="2.3" ry="1.4" fill="#9e8c5a" opacity="0.45"/>
<ellipse cx="809.8" cy="247.9" rx="4.6" ry="1.5" fill="#9e8c5a" opacity="0.45"/>
<ellipse cx="800.8" cy="255.4" rx="2.3" ry="2.0" fill="#9e8c5a" opacity="0.45"/>
<ellipse cx="808.8" cy="248.4" rx="4.4" ry="1.1" fill="#9e8c5a" opacity="0.45"/>
<ellipse cx="866.5" cy="257.1" rx="3.1" ry="1.7" fill="#9e8c5a" opacity="0.45"/>
<ellipse cx="778.8" cy="241.9" rx="4.2" ry="0.9" fill="#9e8c5a" opacity="0.45"/>
<ellipse cx="839.2" cy="249.2" rx="3.9" ry="2.0" fill="#9e8c5a" opacity="0.45"/>
<ellipse cx="801.7" cy="252.0" rx="2.9" ry="0.8" fill="#9e8c5a" opacity="0.45"/>
<ellipse cx="713.4" cy="234.9" rx="3.8" ry="1.3" fill="#9e8c5a" opacity="0.45"/>
<ellipse cx="790.0" cy="254.5" rx="2.4" ry="1.1" fill="#9e8c5a" opacity="0.45"/>
<ellipse cx="812.5" cy="242.8" rx="2.0" ry="1.2" fill="#9e8c5a" opacity="0.45"/>
<ellipse cx="725.0" cy="239.4" rx="2.7" ry="1.5" fill="#9e8c5a" opacity="0.45"/>
<ellipse cx="802.3" cy="244.7" rx="3.9" ry="1.4" fill="#9e8c5a" opacity="0.45"/>
<ellipse cx="729.6" cy="249.1" rx="2.7" ry="1.0" fill="#9e8c5a" opacity="0.45"/>
<ellipse cx="723.3" cy="243.7" rx="4.6" ry="1.7" fill="#9e8c5a" opacity="0.45"/>
<ellipse cx="772.3" cy="242.7" rx="2.0" ry="1.6" fill="#9e8c5a" opacity="0.45"/>
<ellipse cx="798.0" cy="246.6" rx="3.9" ry="1.3" fill="#9e8c5a" opacity="0.45"/>
<ellipse cx="857.9" cy="258.7" rx="2.7" ry="1.9" fill="#9e8c5a" opacity="0.45"/>
<ellipse cx="715.0" cy="241.2" rx="3.2" ry="1.1" fill="#9e8c5a" opacity="0.45"/>
<ellipse cx="717.3" cy="245.4" rx="2.0" ry="1.5" fill="#9e8c5a" opacity="0.45"/>
<ellipse cx="858.5" cy="249.3" rx="2.6" ry="1.5" fill="#9e8c5a" opacity="0.45"/>
<ellipse cx="789.1" cy="250.4" rx="4.4" ry="1.0" fill="#9e8c5a" opacity="0.45"/>
<ellipse cx="757.5" cy="241.8" rx="2.1" ry="1.9" fill="#9e8c5a" opacity="0.45"/>
<ellipse cx="833.3" cy="256.0" rx="2.0" ry="1.8" fill="#9e8c5a" opacity="0.45"/>
<ellipse cx="827.2" cy="251.4" rx="4.2" ry="1.3" fill="#9e8c5a" opacity="0.45"/>
<ellipse cx="744.2" cy="237.3" rx="2.7" ry="0.8" fill="#9e8c5a" opacity="0.45"/>
<ellipse cx="761.7" cy="249.4" rx="4.1" ry="1.8" fill="#9e8c5a" opacity="0.45"/>
<ellipse cx="821.9" cy="247.6" rx="3.7" ry="1.3" fill="#9e8c5a" opacity="0.45"/>
<ellipse cx="834.2" cy="253.0" rx="2.8" ry="1.6" fill="#9e8c5a" opacity="0.45"/>
<ellipse cx="862.4" cy="250.9" rx="4.6" ry="0.8" fill="#9e8c5a" opacity="0.45"/>
<ellipse cx="749.7" cy="239.9" rx="4.2" ry="1.9" fill="#9e8c5a" opacity="0.45"/>
<ellipse cx="827.4" cy="249.2" rx="4.6" ry="1.2" fill="#9e8c5a" opacity="0.45"/>
<ellipse cx="746.3" cy="250.3" rx="3.9" ry="1.6" fill="#9e8c5a" opacity="0.45"/>
<ellipse cx="814.4" cy="258.3" rx="3.4" ry="1.8" fill="#9e8c5a" opacity="0.45"/>
<ellipse cx="819.6" cy="256.9" rx="3.3" ry="1.7" fill="#9e8c5a" opacity="0.45"/>
<ellipse cx="799.3" cy="246.0" rx="2.6" ry="1.5" fill="#9e8c5a" opacity="0.45"/>
<ellipse cx="720.4" cy="247.8" rx="2.4" ry="0.8" fill="#9e8c5a" opacity="0.45"/>
<ellipse cx="725.1" cy="248.6" rx="3.0" ry="1.0" fill="#9e8c5a" opacity="0.45"/>
<ellipse cx="712.6" cy="233.1" rx="4.1" ry="1.6" fill="#9e8c5a" opacity="0.45"/>
<ellipse cx="819.5" cy="254.9" rx="2.2" ry="1.5" fill="#9e8c5a" opacity="0.45"/>
<ellipse cx="766.1" cy="250.9" rx="4.5" ry="1.9" fill="#9e8c5a" opacity="0.45"/>
<ellipse cx="718.6" cy="246.9" rx="4.7" ry="1.9" fill="#9e8c5a" opacity="0.45"/>
<ellipse cx="725.1" cy="237.0" rx="2.3" ry="0.8" fill="#9e8c5a" opacity="0.45"/>
<ellipse cx="843.6" cy="258.6" rx="3.9" ry="1.8" fill="#9e8c5a" opacity="0.45"/>
<!-- small trees -->
<ellipse cx="716" cy="278.5" rx="2.6" ry="5" fill="#4f6246"/>
<ellipse cx="723.5" cy="278" rx="2.8" ry="5.5" fill="#4f6246"/>
<ellipse cx="732" cy="279" rx="1.8" ry="4" fill="#56694b"/>
<ellipse cx="740" cy="278" rx="2.6" ry="5.2" fill="#4f6246"/>
<ellipse cx="746" cy="278.5" rx="2" ry="4.6" fill="#52654a"/>
<!-- river -->
<rect x="708" y="279.2" width="268" height="1.8" fill="#bfc0b8"/>
<!-- meadow -->
<path d="M708 281 L976 281 L976 330 L708 330Z" fill="url(#meadow)"/>
<path d="M708 291 Q780 289 860 292 L860 295 Q780 296 708 296Z" fill="#bba083" opacity="0.55" filter="url(#soft)"/>
<path d="M730 301 Q800 300 850 302 L850 304 Q790 305 730 304Z" fill="#b69c80" opacity="0.45" filter="url(#soft)"/>
<!-- sage brush foreground -->
<path d="M708 322 Q720 320 740 321 Q760 318 790 316 Q820 314 850 313 Q880 309 920 308 Q950 305 976 304 L976 386 L708 386Z" fill="url(#brush)" filter="url(#soft)"/>
<path d="M708 322 Q720 320 740 321 Q760 318 790 316 Q820 314 850 313 Q880 309 920 308 Q950 305 976 304 L976 386 L708 386Z" fill="#fff" filter="url(#tex)" opacity="0.55"/>
<path d="M708 322 Q720 320 740 321 Q760 318 790 316 Q820 314 850 313 Q880 309 920 308 Q950 305 976 304 L976 386 L708 386Z" fill="#000" filter="url(#tex2)" opacity="0.4"/>

<rect x="753.8" y="355.5" width="2.0" height="11.4" fill="#3a2818"/><rect x="757.9" y="355.5" width="2.0" height="11.4" fill="#3a2818"/><rect x="768.8" y="355.5" width="2.0" height="11.4" fill="#3a2818"/><rect x="772.2" y="355.5" width="2.0" height="11.4" fill="#3a2818"/><path d="M749.4 352.5 Q750.8 338.1 757.9 338.1 Q768.1 338.7 774.6 343.5 Q777.3 350.1 774.9 357.3 L761.3 359.1 Q754.5 360.3 750.1 358.5 Z" fill="#3e2a1a"/><path d="M752.8 341.1 Q757.9 337.2 764.7 339.3 Q771.5 341.1 774.2 344.7 Q766.4 344.1 761.3 343.5 Q756.2 343.5 752.8 341.1 Z" fill="#7a5232" opacity="0.9"/><path d="M752.8 344.1 Q745.3 345.0 743.6 356.1 Q742.6 366.0 746.7 366.9 Q750.8 366.3 753.5 357.9 Z" fill="#2e2117"/>
<rect x="783.2" y="359.1" width="2.8" height="13.7" fill="#3a2818"/><rect x="788.7" y="359.1" width="2.8" height="13.7" fill="#3a2818"/><rect x="803.4" y="359.1" width="2.8" height="13.7" fill="#3a2818"/><rect x="808.0" y="359.1" width="2.8" height="13.7" fill="#3a2818"/><path d="M777.2 355.5 Q779.0 338.2 788.7 338.2 Q802.5 338.9 811.2 344.7 Q814.9 352.6 811.7 361.3 L793.3 363.4 Q784.1 364.9 778.1 362.7 Z" fill="#3a281a"/><path d="M781.8 341.8 Q788.7 337.1 797.9 339.7 Q807.1 341.8 810.8 346.1 Q800.2 345.4 793.3 344.7 Q786.4 344.7 781.8 341.8 Z" fill="#5e4228" opacity="0.9"/><path d="M781.8 345.4 Q771.7 346.5 769.4 359.8 Q768.0 371.7 773.5 372.8 Q779.0 372.1 782.7 362.0 Z" fill="#2e2117"/>
<rect x="822.4" y="331.8" width="1.3" height="5.3" fill="#3a2818"/><rect x="825.0" y="331.8" width="1.3" height="5.3" fill="#3a2818"/><rect x="831.7" y="331.8" width="1.3" height="5.3" fill="#3a2818"/><rect x="833.8" y="331.8" width="1.3" height="5.3" fill="#3a2818"/><path d="M819.7 330.4 Q820.5 323.7 825.0 323.7 Q831.2 324.0 835.2 326.2 Q836.9 329.3 835.5 332.6 L827.0 333.5 Q822.9 334.0 820.1 333.2 Z" fill="#5a3a22"/><path d="M821.8 325.1 Q825.0 323.3 829.1 324.2 Q833.4 325.1 835.0 326.8 Q830.2 326.5 827.0 326.2 Q823.9 326.2 821.8 325.1 Z" fill="#8a5c34" opacity="0.9"/><path d="M821.8 326.5 Q817.2 326.9 816.1 332.1 Q815.5 336.7 818.0 337.1 Q820.5 336.8 822.2 332.9 Z" fill="#2e2117"/>
<rect x="855.1" y="347.7" width="3.3" height="12.7" fill="#3a2818"/><rect x="861.8" y="347.7" width="3.3" height="12.7" fill="#3a2818"/><rect x="879.4" y="347.7" width="3.3" height="12.7" fill="#3a2818"/><rect x="884.9" y="347.7" width="3.3" height="12.7" fill="#3a2818"/><path d="M848.0 344.4 Q850.2 328.3 861.8 328.3 Q878.2 328.9 888.7 334.3 Q893.1 341.7 889.2 349.7 L867.2 351.7 Q856.2 353.1 849.1 351.1 Z" fill="#3a281a"/><path d="M853.5 331.6 Q861.8 327.3 872.8 329.6 Q883.8 331.6 888.1 335.6 Q875.5 335.0 867.2 334.3 Q859.0 334.3 853.5 331.6 Z" fill="#654630" opacity="0.9"/><path d="M853.5 335.0 Q841.4 336.0 838.6 348.4 Q837.0 359.4 843.6 360.4 Q850.2 359.8 854.6 350.4 Z" fill="#2e2117"/>
<rect x="865.6" y="322.4" width="1.0" height="4.4" fill="#3a2818"/><rect x="867.4" y="322.4" width="1.0" height="4.4" fill="#3a2818"/><rect x="872.4" y="322.4" width="1.0" height="4.4" fill="#3a2818"/><rect x="874.0" y="322.4" width="1.0" height="4.4" fill="#3a2818"/><path d="M863.6 321.2 Q864.2 315.7 867.5 315.7 Q872.1 316.0 875.1 317.8 Q876.3 320.3 875.2 323.1 L869.0 323.8 Q865.9 324.2 863.9 323.6 Z" fill="#4e3420"/><path d="M865.1 316.9 Q867.5 315.4 870.6 316.2 Q873.7 316.9 874.9 318.3 Q871.4 318.0 869.0 317.8 Q866.7 317.8 865.1 316.9 Z" fill="#7a5230" opacity="0.9"/><path d="M865.1 318.0 Q861.7 318.4 861.0 322.6 Q860.5 326.4 862.4 326.8 Q864.2 326.5 865.5 323.3 Z" fill="#2e2117"/>
<rect x="898.4" y="321.6" width="1.2" height="8.7" fill="#3a2818"/><rect x="900.8" y="321.6" width="1.2" height="8.7" fill="#3a2818"/><rect x="907.3" y="321.6" width="1.2" height="8.7" fill="#3a2818"/><rect x="909.4" y="321.6" width="1.2" height="8.7" fill="#3a2818"/><path d="M895.8 319.3 Q896.6 308.3 900.8 308.3 Q906.9 308.7 910.8 312.4 Q912.4 317.5 911.0 323.0 L902.9 324.4 Q898.8 325.3 896.2 323.9 Z" fill="#3a281a"/><path d="M897.8 310.6 Q900.8 307.6 904.9 309.2 Q909.0 310.6 910.6 313.3 Q905.9 312.9 902.9 312.4 Q899.8 312.4 897.8 310.6 Z" fill="#6a4a2c" opacity="0.9"/><path d="M897.8 312.9 Q893.3 313.6 892.3 322.1 Q891.7 329.7 894.1 330.3 Q896.6 329.9 898.2 323.4 Z" fill="#2e2117"/>
<rect x="933.9" y="315.5" width="1.0" height="4.8" fill="#3a2818"/><rect x="935.9" y="315.5" width="1.0" height="4.8" fill="#3a2818"/><rect x="941.2" y="315.5" width="1.0" height="4.8" fill="#3a2818"/><rect x="942.9" y="315.5" width="1.0" height="4.8" fill="#3a2818"/><path d="M931.8 314.2 Q932.5 308.2 935.9 308.2 Q940.9 308.5 944.0 310.5 Q945.3 313.2 944.2 316.2 L937.6 317.0 Q934.3 317.5 932.1 316.8 Z" fill="#4e3420"/><path d="M933.5 309.5 Q935.9 307.9 939.2 308.8 Q942.5 309.5 943.8 311.0 Q940.0 310.8 937.6 310.5 Q935.1 310.5 933.5 309.5 Z" fill="#8a5c34" opacity="0.9"/><path d="M933.5 310.8 Q929.8 311.1 929.0 315.8 Q928.5 319.9 930.5 320.2 Q932.5 320.0 933.8 316.5 Z" fill="#2e2117"/>
<rect x="948.6" y="308.2" width="1.0" height="2.7" fill="#3a2818"/><rect x="949.8" y="308.2" width="1.0" height="2.7" fill="#3a2818"/><rect x="953.0" y="308.2" width="1.0" height="2.7" fill="#3a2818"/><rect x="954.0" y="308.2" width="1.0" height="2.7" fill="#3a2818"/><path d="M947.5 307.5 Q947.9 304.1 950.0 304.1 Q953.0 304.3 954.9 305.4 Q955.7 306.9 955.0 308.6 L951.0 309.0 Q949.0 309.3 947.7 308.9 Z" fill="#5a3a22"/><path d="M948.5 304.8 Q950.0 303.9 952.0 304.4 Q954.0 304.8 954.8 305.7 Q952.5 305.5 951.0 305.4 Q949.5 305.4 948.5 304.8 Z" fill="#8a5c34" opacity="0.9"/><path d="M948.5 305.5 Q946.3 305.8 945.8 308.3 Q945.5 310.6 946.7 310.9 Q947.9 310.7 948.7 308.8 Z" fill="#2e2117"/>
<rect x="941.7" y="304.6" width="1.0" height="2.3" fill="#3a2818"/><rect x="942.8" y="304.6" width="1.0" height="2.3" fill="#3a2818"/><rect x="945.7" y="304.6" width="1.0" height="2.3" fill="#3a2818"/><rect x="946.6" y="304.6" width="1.0" height="2.3" fill="#3a2818"/><path d="M940.8 304.0 Q941.2 301.1 943.0 301.1 Q945.8 301.2 947.5 302.2 Q948.2 303.5 947.5 305.0 L944.0 305.3 Q942.1 305.6 941.0 305.2 Z" fill="#5a3a22"/><path d="M941.7 301.7 Q943.0 300.9 944.9 301.4 Q946.6 301.7 947.4 302.4 Q945.3 302.3 944.0 302.2 Q942.6 302.2 941.7 301.7 Z" fill="#8a5c34" opacity="0.9"/><path d="M941.7 302.3 Q939.7 302.5 939.3 304.7 Q939.0 306.7 940.1 306.9 Q941.2 306.8 941.9 305.1 Z" fill="#2e2117"/>
<rect x="870.6" y="299.7" width="1.0" height="2.0" fill="#3a2818"/><rect x="871.4" y="299.7" width="1.0" height="2.0" fill="#3a2818"/><rect x="873.5" y="299.7" width="1.0" height="2.0" fill="#3a2818"/><rect x="874.2" y="299.7" width="1.0" height="2.0" fill="#3a2818"/><path d="M870.0 299.2 Q870.3 296.6 871.7 296.6 Q873.7 296.7 874.9 297.6 Q875.5 298.8 875.0 300.1 L872.3 300.4 Q871.0 300.6 870.1 300.3 Z" fill="#52361f"/><path d="M870.7 297.1 Q871.7 296.4 873.0 296.8 Q874.3 297.1 874.9 297.8 Q873.3 297.7 872.3 297.6 Q871.3 297.6 870.7 297.1 Z" fill="#7a5634" opacity="0.9"/><path d="M870.7 297.7 Q869.2 297.8 868.9 299.8 Q868.7 301.6 869.5 301.8 Q870.3 301.7 870.8 300.2 Z" fill="#2e2117"/>
<rect x="877.4" y="298.8" width="1.0" height="1.6" fill="#3a2818"/><rect x="878.2" y="298.8" width="1.0" height="1.6" fill="#3a2818"/><rect x="880.4" y="298.8" width="1.0" height="1.6" fill="#3a2818"/><rect x="881.1" y="298.8" width="1.0" height="1.6" fill="#3a2818"/><path d="M876.8 298.4 Q877.1 296.4 878.5 296.4 Q880.6 296.4 881.8 297.1 Q882.4 298.1 881.9 299.1 L879.2 299.4 Q877.8 299.5 877.0 299.3 Z" fill="#52361f"/><path d="M877.5 296.8 Q878.5 296.2 879.9 296.5 Q881.2 296.8 881.8 297.3 Q880.2 297.2 879.2 297.1 Q878.2 297.1 877.5 296.8 Z" fill="#7a5634" opacity="0.9"/><path d="M877.5 297.2 Q876.0 297.3 875.7 298.9 Q875.5 300.3 876.3 300.5 Q877.1 300.4 877.6 299.2 Z" fill="#2e2117"/>
<rect x="884.4" y="298.7" width="1.0" height="1.6" fill="#3a2818"/><rect x="885.3" y="298.7" width="1.0" height="1.6" fill="#3a2818"/><rect x="887.6" y="298.7" width="1.0" height="1.6" fill="#3a2818"/><rect x="888.4" y="298.7" width="1.0" height="1.6" fill="#3a2818"/><path d="M883.7 298.3 Q884.0 296.3 885.5 296.3 Q887.8 296.4 889.2 297.0 Q889.7 297.9 889.2 298.9 L886.3 299.2 Q884.8 299.3 883.8 299.1 Z" fill="#52361f"/><path d="M884.4 296.7 Q885.5 296.1 887.0 296.4 Q888.5 296.7 889.1 297.2 Q887.4 297.1 886.3 297.0 Q885.2 297.0 884.4 296.7 Z" fill="#7a5634" opacity="0.9"/><path d="M884.4 297.1 Q882.8 297.2 882.4 298.8 Q882.2 300.1 883.1 300.2 Q884.0 300.2 884.6 299.0 Z" fill="#2e2117"/>
<rect x="890.6" y="297.7" width="1.0" height="1.9" fill="#3a2818"/><rect x="891.5" y="297.7" width="1.0" height="1.9" fill="#3a2818"/><rect x="893.9" y="297.7" width="1.0" height="1.9" fill="#3a2818"/><rect x="894.6" y="297.7" width="1.0" height="1.9" fill="#3a2818"/><path d="M889.9 297.2 Q890.2 294.8 891.8 294.8 Q894.0 294.9 895.4 295.7 Q896.0 296.8 895.5 298.0 L892.5 298.3 Q891.0 298.5 890.0 298.2 Z" fill="#52361f"/><path d="M890.6 295.3 Q891.8 294.6 893.2 295.0 Q894.7 295.3 895.3 295.9 Q893.6 295.8 892.5 295.7 Q891.4 295.7 890.6 295.3 Z" fill="#7a5634" opacity="0.9"/><path d="M890.6 295.8 Q889.0 296.0 888.6 297.8 Q888.4 299.5 889.3 299.6 Q890.2 299.5 890.8 298.1 Z" fill="#2e2117"/>
<rect x="897.9" y="299.4" width="1.0" height="1.9" fill="#3a2818"/><rect x="896.9" y="299.4" width="1.0" height="1.9" fill="#3a2818"/><rect x="894.4" y="299.4" width="1.0" height="1.9" fill="#3a2818"/><rect x="893.6" y="299.4" width="1.0" height="1.9" fill="#3a2818"/><path d="M899.7 298.9 Q899.3 296.5 897.7 296.5 Q895.3 296.6 893.8 297.4 Q893.2 298.5 893.7 299.7 L896.9 300.0 Q898.5 300.2 899.5 299.9 Z" fill="#52361f"/><path d="M898.9 297.0 Q897.7 296.3 896.1 296.7 Q894.5 297.0 893.9 297.6 Q895.7 297.5 896.9 297.4 Q898.1 297.4 898.9 297.0 Z" fill="#7a5634" opacity="0.9"/><path d="M898.9 297.5 Q900.6 297.6 901.0 299.5 Q901.2 301.1 900.3 301.3 Q899.3 301.2 898.7 299.8 Z" fill="#2e2117"/>
<rect x="905.0" y="297.1" width="1.0" height="1.8" fill="#3a2818"/><rect x="904.4" y="297.1" width="1.0" height="1.8" fill="#3a2818"/><rect x="902.7" y="297.1" width="1.0" height="1.8" fill="#3a2818"/><rect x="902.2" y="297.1" width="1.0" height="1.8" fill="#3a2818"/><path d="M906.3 296.6 Q906.1 294.3 905.0 294.3 Q903.5 294.4 902.5 295.2 Q902.1 296.2 902.5 297.4 L904.5 297.7 Q905.5 297.9 906.2 297.6 Z" fill="#52361f"/><path d="M905.8 294.8 Q905.0 294.2 904.0 294.5 Q903.0 294.8 902.6 295.4 Q903.7 295.3 904.5 295.2 Q905.3 295.2 905.8 294.8 Z" fill="#7a5634" opacity="0.9"/><path d="M905.8 295.3 Q906.9 295.4 907.1 297.2 Q907.3 298.8 906.7 298.9 Q906.1 298.8 905.7 297.5 Z" fill="#2e2117"/>
<rect x="908.7" y="296.4" width="1.0" height="1.5" fill="#3a2818"/><rect x="909.4" y="296.4" width="1.0" height="1.5" fill="#3a2818"/><rect x="911.2" y="296.4" width="1.0" height="1.5" fill="#3a2818"/><rect x="911.8" y="296.4" width="1.0" height="1.5" fill="#3a2818"/><path d="M908.3 296.0 Q908.5 294.1 909.7 294.1 Q911.4 294.2 912.5 294.8 Q913.0 295.7 912.6 296.7 L910.3 296.9 Q909.1 297.1 908.4 296.9 Z" fill="#52361f"/><path d="M908.8 294.5 Q909.7 294.0 910.9 294.3 Q912.0 294.5 912.5 295.0 Q911.1 294.9 910.3 294.8 Q909.4 294.8 908.8 294.5 Z" fill="#7a5634" opacity="0.9"/><path d="M908.8 294.9 Q907.6 295.0 907.3 296.5 Q907.1 297.9 907.8 298.0 Q908.5 297.9 909.0 296.8 Z" fill="#2e2117"/>
<rect x="917.4" y="297.1" width="1.0" height="1.8" fill="#3a2818"/><rect x="916.5" y="297.1" width="1.0" height="1.8" fill="#3a2818"/><rect x="914.1" y="297.1" width="1.0" height="1.8" fill="#3a2818"/><rect x="913.3" y="297.1" width="1.0" height="1.8" fill="#3a2818"/><path d="M919.1 296.6 Q918.8 294.3 917.2 294.3 Q915.0 294.4 913.5 295.2 Q912.9 296.2 913.5 297.4 L916.5 297.7 Q918.0 297.9 919.0 297.6 Z" fill="#52361f"/><path d="M918.4 294.8 Q917.2 294.2 915.7 294.5 Q914.2 294.8 913.6 295.4 Q915.3 295.3 916.5 295.2 Q917.6 295.2 918.4 294.8 Z" fill="#7a5634" opacity="0.9"/><path d="M918.4 295.3 Q920.0 295.4 920.4 297.2 Q920.6 298.8 919.7 298.9 Q918.8 298.8 918.2 297.5 Z" fill="#2e2117"/>
<rect x="924.9" y="296.8" width="1.0" height="1.8" fill="#3a2818"/><rect x="924.0" y="296.8" width="1.0" height="1.8" fill="#3a2818"/><rect x="921.8" y="296.8" width="1.0" height="1.8" fill="#3a2818"/><rect x="921.1" y="296.8" width="1.0" height="1.8" fill="#3a2818"/><path d="M926.5 296.3 Q926.2 294.1 924.8 294.1 Q922.7 294.2 921.3 294.9 Q920.8 295.9 921.3 297.1 L924.1 297.4 Q925.5 297.5 926.4 297.3 Z" fill="#52361f"/><path d="M925.8 294.5 Q924.8 293.9 923.4 294.3 Q922.0 294.5 921.4 295.1 Q923.0 295.0 924.1 294.9 Q925.1 294.9 925.8 294.5 Z" fill="#7a5634" opacity="0.9"/><path d="M925.8 295.0 Q927.3 295.2 927.7 296.9 Q927.9 298.4 927.1 298.6 Q926.2 298.5 925.7 297.2 Z" fill="#2e2117"/>
<rect x="931.1" y="297.9" width="1.0" height="2.0" fill="#3a2818"/><rect x="930.2" y="297.9" width="1.0" height="2.0" fill="#3a2818"/><rect x="927.6" y="297.9" width="1.0" height="2.0" fill="#3a2818"/><rect x="926.8" y="297.9" width="1.0" height="2.0" fill="#3a2818"/><path d="M932.9 297.4 Q932.6 294.9 930.9 294.9 Q928.5 295.0 927.0 295.8 Q926.4 297.0 926.9 298.2 L930.1 298.6 Q931.7 298.8 932.8 298.5 Z" fill="#52361f"/><path d="M932.1 295.4 Q930.9 294.7 929.3 295.1 Q927.7 295.4 927.1 296.0 Q928.9 295.9 930.1 295.8 Q931.3 295.8 932.1 295.4 Z" fill="#7a5634" opacity="0.9"/><path d="M932.1 295.9 Q933.9 296.1 934.3 298.0 Q934.5 299.8 933.6 299.9 Q932.6 299.8 932.0 298.3 Z" fill="#2e2117"/>
<rect x="937.1" y="295.5" width="1.0" height="1.7" fill="#3a2818"/><rect x="937.7" y="295.5" width="1.0" height="1.7" fill="#3a2818"/><rect x="939.6" y="295.5" width="1.0" height="1.7" fill="#3a2818"/><rect x="940.1" y="295.5" width="1.0" height="1.7" fill="#3a2818"/><path d="M936.6 295.1 Q936.9 293.0 938.1 293.0 Q939.8 293.1 940.9 293.8 Q941.3 294.7 940.9 295.8 L938.6 296.1 Q937.5 296.2 936.8 296.0 Z" fill="#52361f"/><path d="M937.2 293.4 Q938.1 292.8 939.2 293.1 Q940.3 293.4 940.8 293.9 Q939.5 293.9 938.6 293.8 Q937.8 293.8 937.2 293.4 Z" fill="#7a5634" opacity="0.9"/><path d="M937.2 293.9 Q936.0 294.0 935.7 295.6 Q935.5 297.1 936.2 297.2 Q936.9 297.1 937.3 295.9 Z" fill="#2e2117"/>
<rect x="942.3" y="296.8" width="1.0" height="2.0" fill="#3a2818"/><rect x="943.0" y="296.8" width="1.0" height="2.0" fill="#3a2818"/><rect x="945.0" y="296.8" width="1.0" height="2.0" fill="#3a2818"/><rect x="945.6" y="296.8" width="1.0" height="2.0" fill="#3a2818"/><path d="M941.8 296.2 Q942.0 293.7 943.3 293.7 Q945.2 293.8 946.4 294.7 Q946.9 295.8 946.4 297.1 L943.9 297.4 Q942.7 297.6 941.9 297.3 Z" fill="#52361f"/><path d="M942.4 294.2 Q943.3 293.6 944.6 293.9 Q945.8 294.2 946.3 294.9 Q944.9 294.8 943.9 294.7 Q943.0 294.7 942.4 294.2 Z" fill="#7a5634" opacity="0.9"/><path d="M942.4 294.8 Q941.0 294.9 940.7 296.9 Q940.5 298.6 941.3 298.8 Q942.0 298.7 942.5 297.2 Z" fill="#2e2117"/>
<rect x="948.6" y="296.1" width="1.0" height="1.5" fill="#3a2818"/><rect x="949.5" y="296.1" width="1.0" height="1.5" fill="#3a2818"/><rect x="951.9" y="296.1" width="1.0" height="1.5" fill="#3a2818"/><rect x="952.7" y="296.1" width="1.0" height="1.5" fill="#3a2818"/><path d="M947.9 295.7 Q948.2 293.8 949.8 293.8 Q952.1 293.9 953.5 294.5 Q954.1 295.4 953.6 296.3 L950.6 296.6 Q949.0 296.7 948.1 296.5 Z" fill="#52361f"/><path d="M948.7 294.2 Q949.8 293.7 951.3 293.9 Q952.8 294.2 953.4 294.7 Q951.7 294.6 950.6 294.5 Q949.4 294.5 948.7 294.2 Z" fill="#7a5634" opacity="0.9"/><path d="M948.7 294.6 Q947.0 294.7 946.6 296.2 Q946.4 297.5 947.3 297.6 Q948.2 297.5 948.8 296.4 Z" fill="#2e2117"/>
<rect x="954.6" y="296.6" width="1.0" height="2.1" fill="#3a2818"/><rect x="955.4" y="296.6" width="1.0" height="2.1" fill="#3a2818"/><rect x="957.4" y="296.6" width="1.0" height="2.1" fill="#3a2818"/><rect x="958.1" y="296.6" width="1.0" height="2.1" fill="#3a2818"/><path d="M954.1 296.0 Q954.4 293.4 955.7 293.4 Q957.6 293.5 958.8 294.4 Q959.4 295.6 958.9 296.9 L956.3 297.2 Q955.1 297.5 954.2 297.1 Z" fill="#52361f"/><path d="M954.7 294.0 Q955.7 293.2 957.0 293.6 Q958.3 294.0 958.8 294.6 Q957.3 294.5 956.3 294.4 Q955.4 294.4 954.7 294.0 Z" fill="#7a5634" opacity="0.9"/><path d="M954.7 294.5 Q953.3 294.7 953.0 296.7 Q952.8 298.5 953.6 298.7 Q954.4 298.6 954.9 297.0 Z" fill="#2e2117"/>
<rect x="961.1" y="294.2" width="1.0" height="2.0" fill="#3a2818"/><rect x="962.0" y="294.2" width="1.0" height="2.0" fill="#3a2818"/><rect x="964.2" y="294.2" width="1.0" height="2.0" fill="#3a2818"/><rect x="964.9" y="294.2" width="1.0" height="2.0" fill="#3a2818"/><path d="M960.5 293.7 Q960.8 291.2 962.3 291.2 Q964.3 291.3 965.6 292.2 Q966.2 293.3 965.7 294.5 L963.0 294.9 Q961.6 295.1 960.7 294.7 Z" fill="#52361f"/><path d="M961.2 291.8 Q962.3 291.1 963.6 291.4 Q965.0 291.8 965.6 292.4 Q964.0 292.3 963.0 292.2 Q961.9 292.2 961.2 291.8 Z" fill="#7a5634" opacity="0.9"/><path d="M961.2 292.3 Q959.7 292.4 959.4 294.3 Q959.2 296.0 960.0 296.2 Q960.8 296.1 961.4 294.6 Z" fill="#2e2117"/>
<rect x="967.3" y="294.1" width="1.0" height="2.1" fill="#3a2818"/><rect x="968.1" y="294.1" width="1.0" height="2.1" fill="#3a2818"/><rect x="970.0" y="294.1" width="1.0" height="2.1" fill="#3a2818"/><rect x="970.6" y="294.1" width="1.0" height="2.1" fill="#3a2818"/><path d="M966.9 293.6 Q967.1 291.0 968.4 291.0 Q970.2 291.1 971.3 291.9 Q971.8 293.1 971.4 294.5 L969.0 294.8 Q967.8 295.0 967.0 294.7 Z" fill="#52361f"/><path d="M967.5 291.5 Q968.4 290.8 969.6 291.2 Q970.8 291.5 971.3 292.2 Q969.9 292.1 969.0 291.9 Q968.1 291.9 967.5 291.5 Z" fill="#7a5634" opacity="0.9"/><path d="M967.5 292.1 Q966.2 292.2 965.9 294.2 Q965.7 296.0 966.4 296.2 Q967.1 296.1 967.6 294.6 Z" fill="#2e2117"/>
<rect x="931.1" y="303.0" width="1.0" height="1.7" fill="#3a2818"/><rect x="930.5" y="303.0" width="1.0" height="1.7" fill="#3a2818"/><rect x="928.8" y="303.0" width="1.0" height="1.7" fill="#3a2818"/><rect x="928.3" y="303.0" width="1.0" height="1.7" fill="#3a2818"/><path d="M932.5 302.5 Q932.3 300.3 931.2 300.3 Q929.6 300.4 928.6 301.1 Q928.2 302.2 928.6 303.3 L930.6 303.5 Q931.7 303.7 932.4 303.4 Z" fill="#52361f"/><path d="M931.9 300.8 Q931.2 300.2 930.1 300.5 Q929.1 300.8 928.7 301.3 Q929.9 301.2 930.6 301.1 Q931.4 301.1 931.9 300.8 Z" fill="#7a5634" opacity="0.9"/><path d="M931.9 301.2 Q933.1 301.4 933.3 303.1 Q933.5 304.6 932.9 304.7 Q932.3 304.6 931.8 303.4 Z" fill="#2e2117"/>
<rect x="965.2" y="303.0" width="1.0" height="2.0" fill="#3a2818"/><rect x="964.5" y="303.0" width="1.0" height="2.0" fill="#3a2818"/><rect x="962.5" y="303.0" width="1.0" height="2.0" fill="#3a2818"/><rect x="961.9" y="303.0" width="1.0" height="2.0" fill="#3a2818"/><path d="M966.7 302.5 Q966.4 300.0 965.2 300.0 Q963.3 300.1 962.2 300.9 Q961.7 302.1 962.1 303.3 L964.5 303.6 Q965.8 303.8 966.6 303.5 Z" fill="#52361f"/><path d="M966.1 300.5 Q965.2 299.8 963.9 300.2 Q962.7 300.5 962.2 301.1 Q963.6 301.0 964.5 300.9 Q965.5 300.9 966.1 300.5 Z" fill="#7a5634" opacity="0.9"/><path d="M966.1 301.0 Q967.4 301.2 967.7 303.1 Q967.9 304.8 967.2 305.0 Q966.4 304.9 966.0 303.4 Z" fill="#2e2117"/>
<rect x="934.8" y="305.9" width="1.0" height="2.1" fill="#3a2818"/><rect x="934.1" y="305.9" width="1.0" height="2.1" fill="#3a2818"/><rect x="932.5" y="305.9" width="1.0" height="2.1" fill="#3a2818"/><rect x="931.9" y="305.9" width="1.0" height="2.1" fill="#3a2818"/><path d="M936.1 305.4 Q935.9 302.8 934.8 302.8 Q933.2 302.9 932.2 303.8 Q931.8 305.0 932.2 306.3 L934.3 306.6 Q935.3 306.8 936.0 306.5 Z" fill="#52361f"/><path d="M935.6 303.3 Q934.8 302.6 933.7 303.0 Q932.7 303.3 932.3 304.0 Q933.5 303.9 934.3 303.8 Q935.1 303.8 935.6 303.3 Z" fill="#7a5634" opacity="0.9"/><path d="M935.6 303.9 Q936.7 304.0 937.0 306.0 Q937.2 307.9 936.5 308.0 Q935.9 307.9 935.5 306.4 Z" fill="#2e2117"/>
<rect x="929.6" y="304.0" width="1.0" height="1.9" fill="#3a2818"/><rect x="930.2" y="304.0" width="1.0" height="1.9" fill="#3a2818"/><rect x="932.0" y="304.0" width="1.0" height="1.9" fill="#3a2818"/><rect x="932.5" y="304.0" width="1.0" height="1.9" fill="#3a2818"/><path d="M929.2 303.6 Q929.4 301.2 930.6 301.2 Q932.2 301.3 933.2 302.1 Q933.6 303.2 933.3 304.3 L931.1 304.6 Q930.0 304.8 929.3 304.5 Z" fill="#52361f"/><path d="M929.7 301.7 Q930.6 301.1 931.6 301.4 Q932.7 301.7 933.2 302.3 Q931.9 302.2 931.1 302.1 Q930.3 302.1 929.7 301.7 Z" fill="#7a5634" opacity="0.9"/><path d="M929.7 302.2 Q928.5 302.3 928.3 304.1 Q928.1 305.8 928.8 305.9 Q929.4 305.8 929.8 304.4 Z" fill="#2e2117"/>
<rect x="973.8" y="306.5" width="1.0" height="2.2" fill="#3a2818"/><rect x="973.2" y="306.5" width="1.0" height="2.2" fill="#3a2818"/><rect x="971.4" y="306.5" width="1.0" height="2.2" fill="#3a2818"/><rect x="970.8" y="306.5" width="1.0" height="2.2" fill="#3a2818"/><path d="M975.2 305.9 Q975.0 303.1 973.8 303.1 Q972.1 303.3 971.1 304.2 Q970.6 305.5 971.0 306.9 L973.3 307.2 Q974.4 307.4 975.1 307.1 Z" fill="#52361f"/><path d="M974.7 303.7 Q973.8 303.0 972.7 303.4 Q971.6 303.7 971.1 304.4 Q972.4 304.3 973.3 304.2 Q974.1 304.2 974.7 303.7 Z" fill="#7a5634" opacity="0.9"/><path d="M974.7 304.3 Q975.9 304.5 976.2 306.6 Q976.4 308.6 975.7 308.7 Q975.0 308.6 974.6 307.0 Z" fill="#2e2117"/>
<rect x="934.1" y="304.2" width="1.0" height="2.1" fill="#3a2818"/><rect x="934.9" y="304.2" width="1.0" height="2.1" fill="#3a2818"/><rect x="937.0" y="304.2" width="1.0" height="2.1" fill="#3a2818"/><rect x="937.7" y="304.2" width="1.0" height="2.1" fill="#3a2818"/><path d="M933.5 303.7 Q933.8 301.1 935.2 301.1 Q937.2 301.2 938.5 302.1 Q939.0 303.3 938.6 304.6 L935.9 304.9 Q934.5 305.1 933.7 304.8 Z" fill="#52361f"/><path d="M934.2 301.6 Q935.2 300.9 936.5 301.3 Q937.9 301.6 938.4 302.3 Q936.9 302.2 935.9 302.1 Q934.9 302.1 934.2 301.6 Z" fill="#7a5634" opacity="0.9"/><path d="M934.2 302.2 Q932.7 302.3 932.4 304.4 Q932.2 306.2 933.0 306.3 Q933.8 306.2 934.3 304.7 Z" fill="#2e2117"/>
</g></svg>
<div class="p" style="left:707.8px;top:213.5px;width:268.4px;height:172.8px;border:1px solid #e8472c;border-radius:12px"></div>
<!--PHOTOEND-->
<div class="p" style="left:715.5px;top:221.4px;width:51.3px;height:20.2px;border:1px solid #e8472c;border-radius:10.5px;background:rgba(240,236,230,0.12)"></div>
<div class="p" style="left:722px;top:227.7px;width:7.6px;height:7.6px;border-radius:50%;background:#e8472c"></div>
<div class="p" id="live" style="left:733.2px;top:223.5px;font-size:14px;line-height:16px;font-weight:bold;color:#e8472c;white-space:nowrap;letter-spacing:-0.3px">Live</div>
<div class="p" style="left:720.1px;top:363.8px;width:1.6px;height:13.2px;background:#f4f4f0"></div>
<div class="p" style="left:726.5px;top:363.8px;width:1.6px;height:13.2px;background:#f4f4f0"></div>
<svg class="p" style="left:953px;top:362px" width="15" height="15" viewBox="0 0 15 15" fill="none" stroke="#f4f4f0" stroke-width="1.2"><path d="M1.5 13.5 L6 9 M9 6 L13.5 1.5 M9.5 1.5 H13.5 V5.5 M1.5 9.5 V13.5 H5.5"/></svg>
<div class="p" id="wd" style="left:707.8px;top:396px;font-size:12.4px;line-height:14px;font-weight:bold;color:#541414;white-space:nowrap;letter-spacing:-0.12px">Wildlife Detected</div>
<svg class="p" style="left:800px;top:390px" width="30" height="22" viewBox="800 390 30 22"><path fill="#ec4526" d="M816.2 399.9 Q817.2080000000001 402.492 819.8000000000001 403.5 Q817.2080000000001 404.508 816.2 407.1 Q815.192 404.508 812.6 403.5 Q815.192 402.492 816.2 399.9Z M811.6 396.79999999999995 Q812.328 398.67199999999997 814.2 399.4 Q812.328 400.128 811.6 402.0 Q810.8720000000001 400.128 809.0 399.4 Q810.8720000000001 398.67199999999997 811.6 396.79999999999995Z M809.8 403.6 Q810.4159999999999 405.184 812.0 405.8 Q810.4159999999999 406.416 809.8 408.0 Q809.184 406.416 807.5999999999999 405.8 Q809.184 405.184 809.8 403.6Z"/></svg>
<div class="p" style="left:707.4px;top:414.5px;width:267.6px;height:115.8px;border-radius:12px;background:#e8472c"></div>
<div class="p" style="left:707.4px;top:442.3px;width:267.6px;height:1.1px;background:#f5a48e"></div>
<div class="p" id="ab" style="left:717.6px;top:419.5px;font-size:15.1px;line-height:17px;color:#541414;white-space:nowrap;letter-spacing:0.27px;-webkit-text-stroke:0.35px #541414">American Buffalo or Bison</div>
<svg class="p" style="left:955.5px;top:424.8px" width="11" height="10.5" viewBox="0 0 11 10.5" stroke="#f6d2c6" stroke-width="1.1"><path d="M0.5 0.5 L10.5 10 M10.5 0.5 L0.5 10"/></svg>
<div class="p" id="l1" style="left:717.6px;top:449px;font-size:11.6px;line-height:13px;color:#541414;white-space:nowrap;letter-spacing:0.3px;-webkit-text-stroke:0.25px #541414">Last activity:</div>
<div class="p" id="v1" style="left:717.2px;top:464.5px;font-size:16.6px;line-height:18px;font-weight:bold;color:#541414;white-space:nowrap;letter-spacing:-0.35px">8:22 AM</div>
<div class="p" id="l2" style="left:841.8px;top:449px;font-size:11.6px;line-height:13px;color:#541414;white-space:nowrap;letter-spacing:0.3px;-webkit-text-stroke:0.25px #541414">Population:</div>
<div class="p" id="v2" style="left:841.4px;top:464.5px;font-size:16.6px;line-height:18px;font-weight:bold;color:#541414;white-space:nowrap;letter-spacing:-0.35px">4,000</div>
<div class="p" id="l3" style="left:717.6px;top:488.5px;font-size:11.6px;line-height:13px;color:#541414;white-space:nowrap;letter-spacing:0.3px;-webkit-text-stroke:0.25px #541414">Current behavior:</div>
<div class="p" id="v3" style="left:717.2px;top:504px;font-size:16.6px;line-height:18px;font-weight:bold;color:#541414;white-space:nowrap;letter-spacing:-0.35px">Grazing</div>
<div class="p" id="l4" style="left:841.8px;top:488.5px;font-size:11.6px;line-height:13px;color:#541414;white-space:nowrap;letter-spacing:0.3px;-webkit-text-stroke:0.25px #541414">Migration:</div>
<div class="p" id="v4" style="left:841.4px;top:504px;font-size:16.6px;line-height:18px;font-weight:bold;color:#541414;white-space:nowrap;letter-spacing:-0.35px">Northbound</div>
<div class="p" style="left:707.3px;top:538.2px;width:188.7px;height:27.5px;border:1px solid #6e3030;border-radius:14px"></div>
<div class="p" id="wm" style="left:717.6px;top:544px;font-size:15.8px;line-height:18px;font-weight:bold;color:#541414;white-space:nowrap;letter-spacing:-0.45px">Western Meadowlark</div>
<svg class="p" style="left:873.5px;top:546.3px" width="13" height="12.4" viewBox="0 0 13 12.4" stroke="#7a4444" stroke-width="1.1"><path d="M6.5 0 V12.4 M0 6.2 H13"/></svg>
<div class="p" style="left:957.2px;top:542.5px;width:21.3px;height:23.8px;border-radius:3.5px;background:#232323;box-shadow:0 0 2px rgba(0,0,0,0.15)"></div>
<svg class="p" style="left:963.5px;top:549.5px" width="9.5" height="10" viewBox="0 0 19 20" fill="none" stroke="#b8b8b8" stroke-width="1.3"><path d="M6 1 H2.5 Q1 1 1 2.5 V17.5 Q1 19 2.5 19 H6"/><rect x="11" y="1.5" width="6.5" height="7" rx="2"/><rect x="11" y="11.5" width="6.5" height="7" rx="2"/></svg>
</div>
<!--/APP-->
 <!-- status bar -->
 <div class="p" style="left:114px;top:575px;width:873px;height:1px;background:#2a2a2a"></div>
</div>
</body></html>
